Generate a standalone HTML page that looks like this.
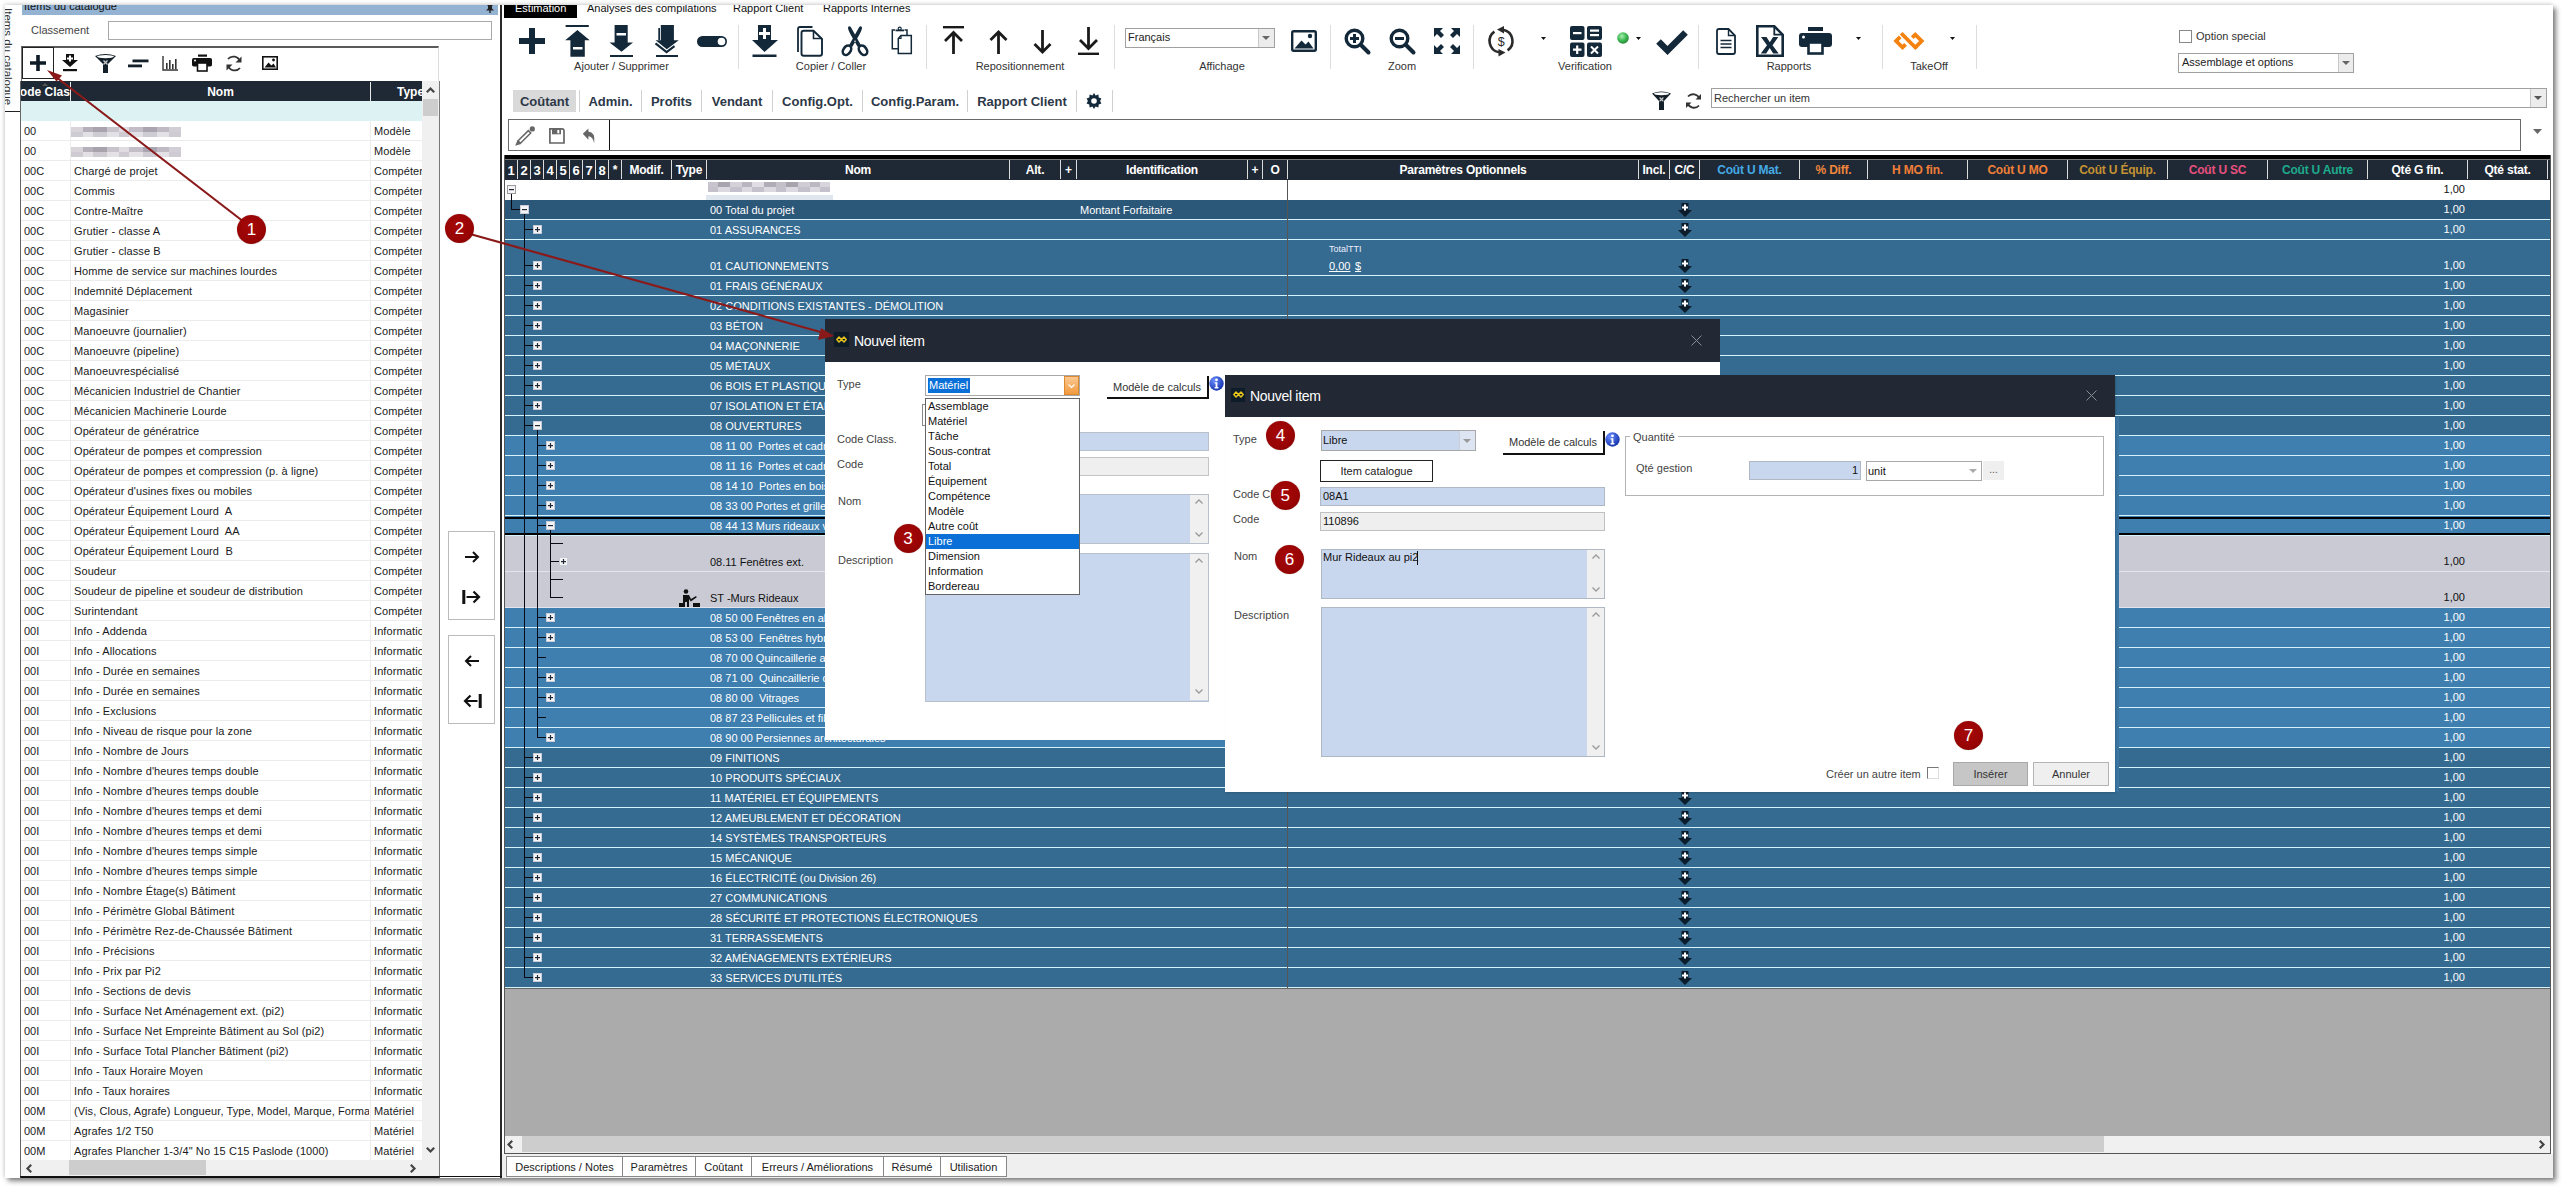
<!DOCTYPE html><html><head><meta charset="utf-8"><style>
html,body{margin:0;padding:0;}
body{width:2562px;height:1187px;overflow:hidden;position:relative;background:#fff;font-family:"Liberation Sans",sans-serif;}
div{position:absolute;}
.t{white-space:pre;font-family:"Liberation Sans",sans-serif;}
.hb{font-weight:bold;color:#fff;font-size:12px;}
</style></head><body>
<div id="win" style="left:5px;top:5px;width:2548px;height:1173px;overflow:hidden;background:#fff;box-shadow:3px 3px 5px rgba(0,0,0,0.5), -1px -1px 4px rgba(0,0,0,0.15)"><div style="left:-5px;top:-5px;width:2562px;height:1187px">
<div class="t" style="left:14px;top:8px;transform-origin:0 0;transform:rotate(90deg);font-size:11.5px;line-height:12px;color:#333">Items du catalogue</div>
<div style="left:5px;top:111px;width:16px;height:1px;background:#222"></div>
<div style="left:22px;top:4px;width:476px;height:11px;background:#94b2d2"></div>
<div style="left:22px;top:4px;width:476px;height:11px;overflow:hidden"><div class="t" style="left:2px;top:-5px;font-size:11px;color:#111;line-height:14px">Items du catalogue</div></div>
<svg style="position:absolute;left:485px;top:4px;overflow:visible" width="10" height="9" viewBox="0 0 10 9"><path d="M2 0h6v1.5h-1v3l2 2H1l2-2v-3H2z M4.3 6.5h1.4V9H4.3z" fill="#222"/></svg>
<div class="t" style="left:31px;top:21px;height:19px;line-height:19px;font-size:11px;color:#444">Classement</div>
<div style="left:108px;top:21px;width:384px;height:19px;border:1px solid #a9a9a9;box-sizing:border-box;background:#fff"></div>
<div style="left:21px;top:46px;width:418px;height:35px;border-top:2px solid #5a5a5a;border-left:1px solid #777;border-right:1px solid #ddd;box-sizing:border-box;background:#fff"></div>
<div style="left:22px;top:47px;width:32px;height:32px;border:1px solid #222;box-sizing:border-box;background:#fff"></div>
<svg style="position:absolute;left:30px;top:55px;overflow:visible" width="16" height="16" viewBox="0 0 16 16"><path d="M6.2 0h3.6v6.2H16v3.6H9.8V16H6.2V9.8H0V6.2h6.2z" fill="#0e1b26"/></svg>
<svg style="position:absolute;left:62px;top:54px;overflow:visible" width="16" height="18" viewBox="0 0 16 18"><path d="M4 0h8v6h4l-8 7-8-7h4z" fill="#111"/><path d="M7 1.5h2v2h2v2H9v2H7v-2H5v-2h2z" fill="#fff"/><rect x="1" y="15" width="14" height="2.2" fill="#111"/></svg>
<svg style="position:absolute;left:95px;top:54px;overflow:visible" width="21" height="19" viewBox="0 0 21 19"><path d="M0 2 Q10.5 -2 21 2 L13 10 V19 H8 V10 Z" fill="#13202a"/><ellipse cx="10.5" cy="2.6" rx="8.5" ry="1.6" fill="#fff"/><path d="M8.5 6.5l4 4m0-4l-4 4" stroke="#ccc" stroke-width="1.3"/></svg>
<svg style="position:absolute;left:128px;top:58px;overflow:visible" width="21" height="11" viewBox="0 0 21 11"><rect x="4.5" y="1.5" width="16" height="2.8" fill="#13202a"/><rect x="0" y="6.5" width="14" height="2.8" fill="#13202a"/></svg>
<svg style="position:absolute;left:162px;top:56px;overflow:visible" width="16" height="15" viewBox="0 0 16 15"><path d="M1 0v14h15" stroke="#333" stroke-width="1.4" fill="none"/><rect x="4" y="7" width="1.6" height="6" fill="#333"/><rect x="7" y="4" width="1.6" height="9" fill="#333"/><rect x="10" y="8" width="1.6" height="5" fill="#333"/><rect x="13" y="3" width="1.6" height="10" fill="#333"/></svg>
<svg style="position:absolute;left:192px;top:54px;overflow:visible" width="20" height="18" viewBox="0 0 20 18"><rect x="6" y="0.5" width="9" height="2.2" fill="#111"/><rect x="0" y="4" width="20" height="8.5" rx="1.8" fill="#111"/><circle cx="3" cy="6.5" r="1" fill="#fff"/><rect x="5.5" y="9" width="9.5" height="8" fill="#fff" stroke="#111" stroke-width="1.6"/></svg>
<svg style="position:absolute;left:225px;top:55px;overflow:visible" width="18" height="17" viewBox="0 0 18 17"><path d="M15 6.5A7 7 0 0 0 3 4" stroke="#333" stroke-width="1.8" fill="none"/><path d="M16.5 1.5v6h-6z" fill="#333"/><path d="M3 10.5A7 7 0 0 0 15 13" stroke="#333" stroke-width="1.8" fill="none"/><path d="M1.5 15.5v-6h6z" fill="#333"/></svg>
<svg style="position:absolute;left:262px;top:56px;overflow:visible" width="16" height="14" viewBox="0 0 16 14"><rect x="0.8" y="0.8" width="14.4" height="12.4" fill="none" stroke="#111" stroke-width="1.6"/><path d="M2.5 11.5l4-5 3 3 2-2 2.5 4z" fill="#111"/><circle cx="11.5" cy="4" r="1.4" fill="#111"/></svg>
<div style="left:20px;top:81px;width:420px;height:1097px;border-left:1px solid #666;border-right:1px solid #777;border-bottom:1px solid #111;box-sizing:border-box;background:#fff"></div>
<div style="left:21px;top:81px;width:401px;height:20px;background:#1f2935"></div>
<div style="left:21px;top:81px;width:49px;height:20px;overflow:hidden"><div class="t hb" style="left:-11px;top:1px;width:71px;text-align:center;line-height:20px">Code Class.</div></div>
<div style="left:70px;top:82px;width:1px;height:19px;background:#e8e8e8"></div>
<div class="t" style="left:71px;top:82px;width:299px;height:20px;line-height:20px;text-align:center;font-weight:bold;color:#fff;font-size:12px">Nom</div>
<div style="left:370px;top:82px;width:1px;height:19px;background:#e8e8e8"></div>
<div style="left:371px;top:81px;width:51px;height:20px;overflow:hidden"><div class="t hb" style="left:26px;top:1px;line-height:20px">Type</div></div>
<svg style="position:absolute;left:42px;top:83px;overflow:visible" width="6" height="3" viewBox="0 0 6 3"><path d="M0 3L3 0L6 3z" fill="#555"/></svg>
<div style="left:422px;top:81px;width:17px;height:1080px;background:#f0f0f0"></div>
<svg style="position:absolute;left:426px;top:87px;overflow:visible" width="9" height="6" viewBox="0 0 9 6"><path d="M0.8 5.2L4.5 1.5L8.2 5.2" stroke="#444" stroke-width="2.2" fill="none"/></svg>
<div style="left:423px;top:99px;width:15px;height:17px;background:#cdcdcd"></div>
<svg style="position:absolute;left:426px;top:1147px;overflow:visible" width="9" height="6" viewBox="0 0 9 6"><path d="M0.8 0.8L4.5 4.5L8.2 0.8" stroke="#444" stroke-width="2.2" fill="none"/></svg>
<div style="left:21px;top:101px;width:401px;height:20px;background:#ddf3f3"></div>
<div style="left:21px;top:121px;width:401px;height:1039px;overflow:hidden"><div style="left:-21px;top:-121px;width:500px;height:1200px">
<div style="left:21px;top:140px;width:401px;height:1px;background:#ececec"></div>
<div class="t" style="left:24px;top:121px;height:20px;line-height:20px;font-size:11px;color:#1a1a22">00</div>
<div style="left:371px;top:121px;width:51px;height:20px;overflow:hidden"><div class="t" style="left:3px;top:0;line-height:20px;font-size:11px;letter-spacing:0.1px;color:#1a1a22">Modèle</div></div>
<div style="left:21px;top:160px;width:401px;height:1px;background:#ececec"></div>
<div class="t" style="left:24px;top:141px;height:20px;line-height:20px;font-size:11px;color:#1a1a22">00</div>
<div style="left:371px;top:141px;width:51px;height:20px;overflow:hidden"><div class="t" style="left:3px;top:0;line-height:20px;font-size:11px;letter-spacing:0.1px;color:#1a1a22">Modèle</div></div>
<div style="left:21px;top:180px;width:401px;height:1px;background:#ececec"></div>
<div class="t" style="left:24px;top:161px;height:20px;line-height:20px;font-size:11px;color:#1a1a22">00C</div>
<div style="left:71px;top:161px;width:298px;height:20px;overflow:hidden"><div class="t" style="left:3px;top:0;line-height:20px;font-size:11px;letter-spacing:0.1px;color:#1a1a22">Chargé de projet</div></div>
<div style="left:371px;top:161px;width:51px;height:20px;overflow:hidden"><div class="t" style="left:3px;top:0;line-height:20px;font-size:11px;letter-spacing:0.1px;color:#1a1a22">Compétence</div></div>
<div style="left:21px;top:200px;width:401px;height:1px;background:#ececec"></div>
<div class="t" style="left:24px;top:181px;height:20px;line-height:20px;font-size:11px;color:#1a1a22">00C</div>
<div style="left:71px;top:181px;width:298px;height:20px;overflow:hidden"><div class="t" style="left:3px;top:0;line-height:20px;font-size:11px;letter-spacing:0.1px;color:#1a1a22">Commis</div></div>
<div style="left:371px;top:181px;width:51px;height:20px;overflow:hidden"><div class="t" style="left:3px;top:0;line-height:20px;font-size:11px;letter-spacing:0.1px;color:#1a1a22">Compétence</div></div>
<div style="left:21px;top:220px;width:401px;height:1px;background:#ececec"></div>
<div class="t" style="left:24px;top:201px;height:20px;line-height:20px;font-size:11px;color:#1a1a22">00C</div>
<div style="left:71px;top:201px;width:298px;height:20px;overflow:hidden"><div class="t" style="left:3px;top:0;line-height:20px;font-size:11px;letter-spacing:0.1px;color:#1a1a22">Contre-Maître</div></div>
<div style="left:371px;top:201px;width:51px;height:20px;overflow:hidden"><div class="t" style="left:3px;top:0;line-height:20px;font-size:11px;letter-spacing:0.1px;color:#1a1a22">Compétence</div></div>
<div style="left:21px;top:240px;width:401px;height:1px;background:#ececec"></div>
<div class="t" style="left:24px;top:221px;height:20px;line-height:20px;font-size:11px;color:#1a1a22">00C</div>
<div style="left:71px;top:221px;width:298px;height:20px;overflow:hidden"><div class="t" style="left:3px;top:0;line-height:20px;font-size:11px;letter-spacing:0.1px;color:#1a1a22">Grutier - classe A</div></div>
<div style="left:371px;top:221px;width:51px;height:20px;overflow:hidden"><div class="t" style="left:3px;top:0;line-height:20px;font-size:11px;letter-spacing:0.1px;color:#1a1a22">Compétence</div></div>
<div style="left:21px;top:260px;width:401px;height:1px;background:#ececec"></div>
<div class="t" style="left:24px;top:241px;height:20px;line-height:20px;font-size:11px;color:#1a1a22">00C</div>
<div style="left:71px;top:241px;width:298px;height:20px;overflow:hidden"><div class="t" style="left:3px;top:0;line-height:20px;font-size:11px;letter-spacing:0.1px;color:#1a1a22">Grutier - classe B</div></div>
<div style="left:371px;top:241px;width:51px;height:20px;overflow:hidden"><div class="t" style="left:3px;top:0;line-height:20px;font-size:11px;letter-spacing:0.1px;color:#1a1a22">Compétence</div></div>
<div style="left:21px;top:280px;width:401px;height:1px;background:#ececec"></div>
<div class="t" style="left:24px;top:261px;height:20px;line-height:20px;font-size:11px;color:#1a1a22">00C</div>
<div style="left:71px;top:261px;width:298px;height:20px;overflow:hidden"><div class="t" style="left:3px;top:0;line-height:20px;font-size:11px;letter-spacing:0.1px;color:#1a1a22">Homme de service sur machines lourdes</div></div>
<div style="left:371px;top:261px;width:51px;height:20px;overflow:hidden"><div class="t" style="left:3px;top:0;line-height:20px;font-size:11px;letter-spacing:0.1px;color:#1a1a22">Compétence</div></div>
<div style="left:21px;top:300px;width:401px;height:1px;background:#ececec"></div>
<div class="t" style="left:24px;top:281px;height:20px;line-height:20px;font-size:11px;color:#1a1a22">00C</div>
<div style="left:71px;top:281px;width:298px;height:20px;overflow:hidden"><div class="t" style="left:3px;top:0;line-height:20px;font-size:11px;letter-spacing:0.1px;color:#1a1a22">Indemnité Déplacement</div></div>
<div style="left:371px;top:281px;width:51px;height:20px;overflow:hidden"><div class="t" style="left:3px;top:0;line-height:20px;font-size:11px;letter-spacing:0.1px;color:#1a1a22">Compétence</div></div>
<div style="left:21px;top:320px;width:401px;height:1px;background:#ececec"></div>
<div class="t" style="left:24px;top:301px;height:20px;line-height:20px;font-size:11px;color:#1a1a22">00C</div>
<div style="left:71px;top:301px;width:298px;height:20px;overflow:hidden"><div class="t" style="left:3px;top:0;line-height:20px;font-size:11px;letter-spacing:0.1px;color:#1a1a22">Magasinier</div></div>
<div style="left:371px;top:301px;width:51px;height:20px;overflow:hidden"><div class="t" style="left:3px;top:0;line-height:20px;font-size:11px;letter-spacing:0.1px;color:#1a1a22">Compétence</div></div>
<div style="left:21px;top:340px;width:401px;height:1px;background:#ececec"></div>
<div class="t" style="left:24px;top:321px;height:20px;line-height:20px;font-size:11px;color:#1a1a22">00C</div>
<div style="left:71px;top:321px;width:298px;height:20px;overflow:hidden"><div class="t" style="left:3px;top:0;line-height:20px;font-size:11px;letter-spacing:0.1px;color:#1a1a22">Manoeuvre (journalier)</div></div>
<div style="left:371px;top:321px;width:51px;height:20px;overflow:hidden"><div class="t" style="left:3px;top:0;line-height:20px;font-size:11px;letter-spacing:0.1px;color:#1a1a22">Compétence</div></div>
<div style="left:21px;top:360px;width:401px;height:1px;background:#ececec"></div>
<div class="t" style="left:24px;top:341px;height:20px;line-height:20px;font-size:11px;color:#1a1a22">00C</div>
<div style="left:71px;top:341px;width:298px;height:20px;overflow:hidden"><div class="t" style="left:3px;top:0;line-height:20px;font-size:11px;letter-spacing:0.1px;color:#1a1a22">Manoeuvre (pipeline)</div></div>
<div style="left:371px;top:341px;width:51px;height:20px;overflow:hidden"><div class="t" style="left:3px;top:0;line-height:20px;font-size:11px;letter-spacing:0.1px;color:#1a1a22">Compétence</div></div>
<div style="left:21px;top:380px;width:401px;height:1px;background:#ececec"></div>
<div class="t" style="left:24px;top:361px;height:20px;line-height:20px;font-size:11px;color:#1a1a22">00C</div>
<div style="left:71px;top:361px;width:298px;height:20px;overflow:hidden"><div class="t" style="left:3px;top:0;line-height:20px;font-size:11px;letter-spacing:0.1px;color:#1a1a22">Manoeuvrespécialisé</div></div>
<div style="left:371px;top:361px;width:51px;height:20px;overflow:hidden"><div class="t" style="left:3px;top:0;line-height:20px;font-size:11px;letter-spacing:0.1px;color:#1a1a22">Compétence</div></div>
<div style="left:21px;top:400px;width:401px;height:1px;background:#ececec"></div>
<div class="t" style="left:24px;top:381px;height:20px;line-height:20px;font-size:11px;color:#1a1a22">00C</div>
<div style="left:71px;top:381px;width:298px;height:20px;overflow:hidden"><div class="t" style="left:3px;top:0;line-height:20px;font-size:11px;letter-spacing:0.1px;color:#1a1a22">Mécanicien Industriel de Chantier</div></div>
<div style="left:371px;top:381px;width:51px;height:20px;overflow:hidden"><div class="t" style="left:3px;top:0;line-height:20px;font-size:11px;letter-spacing:0.1px;color:#1a1a22">Compétence</div></div>
<div style="left:21px;top:420px;width:401px;height:1px;background:#ececec"></div>
<div class="t" style="left:24px;top:401px;height:20px;line-height:20px;font-size:11px;color:#1a1a22">00C</div>
<div style="left:71px;top:401px;width:298px;height:20px;overflow:hidden"><div class="t" style="left:3px;top:0;line-height:20px;font-size:11px;letter-spacing:0.1px;color:#1a1a22">Mécanicien Machinerie Lourde</div></div>
<div style="left:371px;top:401px;width:51px;height:20px;overflow:hidden"><div class="t" style="left:3px;top:0;line-height:20px;font-size:11px;letter-spacing:0.1px;color:#1a1a22">Compétence</div></div>
<div style="left:21px;top:440px;width:401px;height:1px;background:#ececec"></div>
<div class="t" style="left:24px;top:421px;height:20px;line-height:20px;font-size:11px;color:#1a1a22">00C</div>
<div style="left:71px;top:421px;width:298px;height:20px;overflow:hidden"><div class="t" style="left:3px;top:0;line-height:20px;font-size:11px;letter-spacing:0.1px;color:#1a1a22">Opérateur de génératrice</div></div>
<div style="left:371px;top:421px;width:51px;height:20px;overflow:hidden"><div class="t" style="left:3px;top:0;line-height:20px;font-size:11px;letter-spacing:0.1px;color:#1a1a22">Compétence</div></div>
<div style="left:21px;top:460px;width:401px;height:1px;background:#ececec"></div>
<div class="t" style="left:24px;top:441px;height:20px;line-height:20px;font-size:11px;color:#1a1a22">00C</div>
<div style="left:71px;top:441px;width:298px;height:20px;overflow:hidden"><div class="t" style="left:3px;top:0;line-height:20px;font-size:11px;letter-spacing:0.1px;color:#1a1a22">Opérateur de pompes et compression</div></div>
<div style="left:371px;top:441px;width:51px;height:20px;overflow:hidden"><div class="t" style="left:3px;top:0;line-height:20px;font-size:11px;letter-spacing:0.1px;color:#1a1a22">Compétence</div></div>
<div style="left:21px;top:480px;width:401px;height:1px;background:#ececec"></div>
<div class="t" style="left:24px;top:461px;height:20px;line-height:20px;font-size:11px;color:#1a1a22">00C</div>
<div style="left:71px;top:461px;width:298px;height:20px;overflow:hidden"><div class="t" style="left:3px;top:0;line-height:20px;font-size:11px;letter-spacing:0.1px;color:#1a1a22">Opérateur de pompes et compression (p. à ligne)</div></div>
<div style="left:371px;top:461px;width:51px;height:20px;overflow:hidden"><div class="t" style="left:3px;top:0;line-height:20px;font-size:11px;letter-spacing:0.1px;color:#1a1a22">Compétence</div></div>
<div style="left:21px;top:500px;width:401px;height:1px;background:#ececec"></div>
<div class="t" style="left:24px;top:481px;height:20px;line-height:20px;font-size:11px;color:#1a1a22">00C</div>
<div style="left:71px;top:481px;width:298px;height:20px;overflow:hidden"><div class="t" style="left:3px;top:0;line-height:20px;font-size:11px;letter-spacing:0.1px;color:#1a1a22">Opérateur d&#x27;usines fixes ou mobiles</div></div>
<div style="left:371px;top:481px;width:51px;height:20px;overflow:hidden"><div class="t" style="left:3px;top:0;line-height:20px;font-size:11px;letter-spacing:0.1px;color:#1a1a22">Compétence</div></div>
<div style="left:21px;top:520px;width:401px;height:1px;background:#ececec"></div>
<div class="t" style="left:24px;top:501px;height:20px;line-height:20px;font-size:11px;color:#1a1a22">00C</div>
<div style="left:71px;top:501px;width:298px;height:20px;overflow:hidden"><div class="t" style="left:3px;top:0;line-height:20px;font-size:11px;letter-spacing:0.1px;color:#1a1a22">Opérateur Équipement Lourd  A</div></div>
<div style="left:371px;top:501px;width:51px;height:20px;overflow:hidden"><div class="t" style="left:3px;top:0;line-height:20px;font-size:11px;letter-spacing:0.1px;color:#1a1a22">Compétence</div></div>
<div style="left:21px;top:540px;width:401px;height:1px;background:#ececec"></div>
<div class="t" style="left:24px;top:521px;height:20px;line-height:20px;font-size:11px;color:#1a1a22">00C</div>
<div style="left:71px;top:521px;width:298px;height:20px;overflow:hidden"><div class="t" style="left:3px;top:0;line-height:20px;font-size:11px;letter-spacing:0.1px;color:#1a1a22">Opérateur Équipement Lourd  AA</div></div>
<div style="left:371px;top:521px;width:51px;height:20px;overflow:hidden"><div class="t" style="left:3px;top:0;line-height:20px;font-size:11px;letter-spacing:0.1px;color:#1a1a22">Compétence</div></div>
<div style="left:21px;top:560px;width:401px;height:1px;background:#ececec"></div>
<div class="t" style="left:24px;top:541px;height:20px;line-height:20px;font-size:11px;color:#1a1a22">00C</div>
<div style="left:71px;top:541px;width:298px;height:20px;overflow:hidden"><div class="t" style="left:3px;top:0;line-height:20px;font-size:11px;letter-spacing:0.1px;color:#1a1a22">Opérateur Équipement Lourd  B</div></div>
<div style="left:371px;top:541px;width:51px;height:20px;overflow:hidden"><div class="t" style="left:3px;top:0;line-height:20px;font-size:11px;letter-spacing:0.1px;color:#1a1a22">Compétence</div></div>
<div style="left:21px;top:580px;width:401px;height:1px;background:#ececec"></div>
<div class="t" style="left:24px;top:561px;height:20px;line-height:20px;font-size:11px;color:#1a1a22">00C</div>
<div style="left:71px;top:561px;width:298px;height:20px;overflow:hidden"><div class="t" style="left:3px;top:0;line-height:20px;font-size:11px;letter-spacing:0.1px;color:#1a1a22">Soudeur</div></div>
<div style="left:371px;top:561px;width:51px;height:20px;overflow:hidden"><div class="t" style="left:3px;top:0;line-height:20px;font-size:11px;letter-spacing:0.1px;color:#1a1a22">Compétence</div></div>
<div style="left:21px;top:600px;width:401px;height:1px;background:#ececec"></div>
<div class="t" style="left:24px;top:581px;height:20px;line-height:20px;font-size:11px;color:#1a1a22">00C</div>
<div style="left:71px;top:581px;width:298px;height:20px;overflow:hidden"><div class="t" style="left:3px;top:0;line-height:20px;font-size:11px;letter-spacing:0.1px;color:#1a1a22">Soudeur de pipeline et soudeur de distribution</div></div>
<div style="left:371px;top:581px;width:51px;height:20px;overflow:hidden"><div class="t" style="left:3px;top:0;line-height:20px;font-size:11px;letter-spacing:0.1px;color:#1a1a22">Compétence</div></div>
<div style="left:21px;top:620px;width:401px;height:1px;background:#ececec"></div>
<div class="t" style="left:24px;top:601px;height:20px;line-height:20px;font-size:11px;color:#1a1a22">00C</div>
<div style="left:71px;top:601px;width:298px;height:20px;overflow:hidden"><div class="t" style="left:3px;top:0;line-height:20px;font-size:11px;letter-spacing:0.1px;color:#1a1a22">Surintendant</div></div>
<div style="left:371px;top:601px;width:51px;height:20px;overflow:hidden"><div class="t" style="left:3px;top:0;line-height:20px;font-size:11px;letter-spacing:0.1px;color:#1a1a22">Compétence</div></div>
<div style="left:21px;top:640px;width:401px;height:1px;background:#ececec"></div>
<div class="t" style="left:24px;top:621px;height:20px;line-height:20px;font-size:11px;color:#1a1a22">00I</div>
<div style="left:71px;top:621px;width:298px;height:20px;overflow:hidden"><div class="t" style="left:3px;top:0;line-height:20px;font-size:11px;letter-spacing:0.1px;color:#1a1a22">Info - Addenda</div></div>
<div style="left:371px;top:621px;width:51px;height:20px;overflow:hidden"><div class="t" style="left:3px;top:0;line-height:20px;font-size:11px;letter-spacing:0.1px;color:#1a1a22">Information</div></div>
<div style="left:21px;top:660px;width:401px;height:1px;background:#ececec"></div>
<div class="t" style="left:24px;top:641px;height:20px;line-height:20px;font-size:11px;color:#1a1a22">00I</div>
<div style="left:71px;top:641px;width:298px;height:20px;overflow:hidden"><div class="t" style="left:3px;top:0;line-height:20px;font-size:11px;letter-spacing:0.1px;color:#1a1a22">Info - Allocations</div></div>
<div style="left:371px;top:641px;width:51px;height:20px;overflow:hidden"><div class="t" style="left:3px;top:0;line-height:20px;font-size:11px;letter-spacing:0.1px;color:#1a1a22">Information</div></div>
<div style="left:21px;top:680px;width:401px;height:1px;background:#ececec"></div>
<div class="t" style="left:24px;top:661px;height:20px;line-height:20px;font-size:11px;color:#1a1a22">00I</div>
<div style="left:71px;top:661px;width:298px;height:20px;overflow:hidden"><div class="t" style="left:3px;top:0;line-height:20px;font-size:11px;letter-spacing:0.1px;color:#1a1a22">Info - Durée en semaines</div></div>
<div style="left:371px;top:661px;width:51px;height:20px;overflow:hidden"><div class="t" style="left:3px;top:0;line-height:20px;font-size:11px;letter-spacing:0.1px;color:#1a1a22">Information</div></div>
<div style="left:21px;top:700px;width:401px;height:1px;background:#ececec"></div>
<div class="t" style="left:24px;top:681px;height:20px;line-height:20px;font-size:11px;color:#1a1a22">00I</div>
<div style="left:71px;top:681px;width:298px;height:20px;overflow:hidden"><div class="t" style="left:3px;top:0;line-height:20px;font-size:11px;letter-spacing:0.1px;color:#1a1a22">Info - Durée en semaines</div></div>
<div style="left:371px;top:681px;width:51px;height:20px;overflow:hidden"><div class="t" style="left:3px;top:0;line-height:20px;font-size:11px;letter-spacing:0.1px;color:#1a1a22">Information</div></div>
<div style="left:21px;top:720px;width:401px;height:1px;background:#ececec"></div>
<div class="t" style="left:24px;top:701px;height:20px;line-height:20px;font-size:11px;color:#1a1a22">00I</div>
<div style="left:71px;top:701px;width:298px;height:20px;overflow:hidden"><div class="t" style="left:3px;top:0;line-height:20px;font-size:11px;letter-spacing:0.1px;color:#1a1a22">Info - Exclusions</div></div>
<div style="left:371px;top:701px;width:51px;height:20px;overflow:hidden"><div class="t" style="left:3px;top:0;line-height:20px;font-size:11px;letter-spacing:0.1px;color:#1a1a22">Information</div></div>
<div style="left:21px;top:740px;width:401px;height:1px;background:#ececec"></div>
<div class="t" style="left:24px;top:721px;height:20px;line-height:20px;font-size:11px;color:#1a1a22">00I</div>
<div style="left:71px;top:721px;width:298px;height:20px;overflow:hidden"><div class="t" style="left:3px;top:0;line-height:20px;font-size:11px;letter-spacing:0.1px;color:#1a1a22">Info - Niveau de risque pour la zone</div></div>
<div style="left:371px;top:721px;width:51px;height:20px;overflow:hidden"><div class="t" style="left:3px;top:0;line-height:20px;font-size:11px;letter-spacing:0.1px;color:#1a1a22">Information</div></div>
<div style="left:21px;top:760px;width:401px;height:1px;background:#ececec"></div>
<div class="t" style="left:24px;top:741px;height:20px;line-height:20px;font-size:11px;color:#1a1a22">00I</div>
<div style="left:71px;top:741px;width:298px;height:20px;overflow:hidden"><div class="t" style="left:3px;top:0;line-height:20px;font-size:11px;letter-spacing:0.1px;color:#1a1a22">Info - Nombre de Jours</div></div>
<div style="left:371px;top:741px;width:51px;height:20px;overflow:hidden"><div class="t" style="left:3px;top:0;line-height:20px;font-size:11px;letter-spacing:0.1px;color:#1a1a22">Information</div></div>
<div style="left:21px;top:780px;width:401px;height:1px;background:#ececec"></div>
<div class="t" style="left:24px;top:761px;height:20px;line-height:20px;font-size:11px;color:#1a1a22">00I</div>
<div style="left:71px;top:761px;width:298px;height:20px;overflow:hidden"><div class="t" style="left:3px;top:0;line-height:20px;font-size:11px;letter-spacing:0.1px;color:#1a1a22">Info - Nombre d&#x27;heures temps double</div></div>
<div style="left:371px;top:761px;width:51px;height:20px;overflow:hidden"><div class="t" style="left:3px;top:0;line-height:20px;font-size:11px;letter-spacing:0.1px;color:#1a1a22">Information</div></div>
<div style="left:21px;top:800px;width:401px;height:1px;background:#ececec"></div>
<div class="t" style="left:24px;top:781px;height:20px;line-height:20px;font-size:11px;color:#1a1a22">00I</div>
<div style="left:71px;top:781px;width:298px;height:20px;overflow:hidden"><div class="t" style="left:3px;top:0;line-height:20px;font-size:11px;letter-spacing:0.1px;color:#1a1a22">Info - Nombre d&#x27;heures temps double</div></div>
<div style="left:371px;top:781px;width:51px;height:20px;overflow:hidden"><div class="t" style="left:3px;top:0;line-height:20px;font-size:11px;letter-spacing:0.1px;color:#1a1a22">Information</div></div>
<div style="left:21px;top:820px;width:401px;height:1px;background:#ececec"></div>
<div class="t" style="left:24px;top:801px;height:20px;line-height:20px;font-size:11px;color:#1a1a22">00I</div>
<div style="left:71px;top:801px;width:298px;height:20px;overflow:hidden"><div class="t" style="left:3px;top:0;line-height:20px;font-size:11px;letter-spacing:0.1px;color:#1a1a22">Info - Nombre d&#x27;heures temps et demi</div></div>
<div style="left:371px;top:801px;width:51px;height:20px;overflow:hidden"><div class="t" style="left:3px;top:0;line-height:20px;font-size:11px;letter-spacing:0.1px;color:#1a1a22">Information</div></div>
<div style="left:21px;top:840px;width:401px;height:1px;background:#ececec"></div>
<div class="t" style="left:24px;top:821px;height:20px;line-height:20px;font-size:11px;color:#1a1a22">00I</div>
<div style="left:71px;top:821px;width:298px;height:20px;overflow:hidden"><div class="t" style="left:3px;top:0;line-height:20px;font-size:11px;letter-spacing:0.1px;color:#1a1a22">Info - Nombre d&#x27;heures temps et demi</div></div>
<div style="left:371px;top:821px;width:51px;height:20px;overflow:hidden"><div class="t" style="left:3px;top:0;line-height:20px;font-size:11px;letter-spacing:0.1px;color:#1a1a22">Information</div></div>
<div style="left:21px;top:860px;width:401px;height:1px;background:#ececec"></div>
<div class="t" style="left:24px;top:841px;height:20px;line-height:20px;font-size:11px;color:#1a1a22">00I</div>
<div style="left:71px;top:841px;width:298px;height:20px;overflow:hidden"><div class="t" style="left:3px;top:0;line-height:20px;font-size:11px;letter-spacing:0.1px;color:#1a1a22">Info - Nombre d&#x27;heures temps simple</div></div>
<div style="left:371px;top:841px;width:51px;height:20px;overflow:hidden"><div class="t" style="left:3px;top:0;line-height:20px;font-size:11px;letter-spacing:0.1px;color:#1a1a22">Information</div></div>
<div style="left:21px;top:880px;width:401px;height:1px;background:#ececec"></div>
<div class="t" style="left:24px;top:861px;height:20px;line-height:20px;font-size:11px;color:#1a1a22">00I</div>
<div style="left:71px;top:861px;width:298px;height:20px;overflow:hidden"><div class="t" style="left:3px;top:0;line-height:20px;font-size:11px;letter-spacing:0.1px;color:#1a1a22">Info - Nombre d&#x27;heures temps simple</div></div>
<div style="left:371px;top:861px;width:51px;height:20px;overflow:hidden"><div class="t" style="left:3px;top:0;line-height:20px;font-size:11px;letter-spacing:0.1px;color:#1a1a22">Information</div></div>
<div style="left:21px;top:900px;width:401px;height:1px;background:#ececec"></div>
<div class="t" style="left:24px;top:881px;height:20px;line-height:20px;font-size:11px;color:#1a1a22">00I</div>
<div style="left:71px;top:881px;width:298px;height:20px;overflow:hidden"><div class="t" style="left:3px;top:0;line-height:20px;font-size:11px;letter-spacing:0.1px;color:#1a1a22">Info - Nombre Étage(s) Bâtiment</div></div>
<div style="left:371px;top:881px;width:51px;height:20px;overflow:hidden"><div class="t" style="left:3px;top:0;line-height:20px;font-size:11px;letter-spacing:0.1px;color:#1a1a22">Information</div></div>
<div style="left:21px;top:920px;width:401px;height:1px;background:#ececec"></div>
<div class="t" style="left:24px;top:901px;height:20px;line-height:20px;font-size:11px;color:#1a1a22">00I</div>
<div style="left:71px;top:901px;width:298px;height:20px;overflow:hidden"><div class="t" style="left:3px;top:0;line-height:20px;font-size:11px;letter-spacing:0.1px;color:#1a1a22">Info - Périmètre Global Bâtiment</div></div>
<div style="left:371px;top:901px;width:51px;height:20px;overflow:hidden"><div class="t" style="left:3px;top:0;line-height:20px;font-size:11px;letter-spacing:0.1px;color:#1a1a22">Information</div></div>
<div style="left:21px;top:940px;width:401px;height:1px;background:#ececec"></div>
<div class="t" style="left:24px;top:921px;height:20px;line-height:20px;font-size:11px;color:#1a1a22">00I</div>
<div style="left:71px;top:921px;width:298px;height:20px;overflow:hidden"><div class="t" style="left:3px;top:0;line-height:20px;font-size:11px;letter-spacing:0.1px;color:#1a1a22">Info - Périmètre Rez-de-Chaussée Bâtiment</div></div>
<div style="left:371px;top:921px;width:51px;height:20px;overflow:hidden"><div class="t" style="left:3px;top:0;line-height:20px;font-size:11px;letter-spacing:0.1px;color:#1a1a22">Information</div></div>
<div style="left:21px;top:960px;width:401px;height:1px;background:#ececec"></div>
<div class="t" style="left:24px;top:941px;height:20px;line-height:20px;font-size:11px;color:#1a1a22">00I</div>
<div style="left:71px;top:941px;width:298px;height:20px;overflow:hidden"><div class="t" style="left:3px;top:0;line-height:20px;font-size:11px;letter-spacing:0.1px;color:#1a1a22">Info - Précisions</div></div>
<div style="left:371px;top:941px;width:51px;height:20px;overflow:hidden"><div class="t" style="left:3px;top:0;line-height:20px;font-size:11px;letter-spacing:0.1px;color:#1a1a22">Information</div></div>
<div style="left:21px;top:980px;width:401px;height:1px;background:#ececec"></div>
<div class="t" style="left:24px;top:961px;height:20px;line-height:20px;font-size:11px;color:#1a1a22">00I</div>
<div style="left:71px;top:961px;width:298px;height:20px;overflow:hidden"><div class="t" style="left:3px;top:0;line-height:20px;font-size:11px;letter-spacing:0.1px;color:#1a1a22">Info - Prix par Pi2</div></div>
<div style="left:371px;top:961px;width:51px;height:20px;overflow:hidden"><div class="t" style="left:3px;top:0;line-height:20px;font-size:11px;letter-spacing:0.1px;color:#1a1a22">Information</div></div>
<div style="left:21px;top:1000px;width:401px;height:1px;background:#ececec"></div>
<div class="t" style="left:24px;top:981px;height:20px;line-height:20px;font-size:11px;color:#1a1a22">00I</div>
<div style="left:71px;top:981px;width:298px;height:20px;overflow:hidden"><div class="t" style="left:3px;top:0;line-height:20px;font-size:11px;letter-spacing:0.1px;color:#1a1a22">Info - Sections de devis</div></div>
<div style="left:371px;top:981px;width:51px;height:20px;overflow:hidden"><div class="t" style="left:3px;top:0;line-height:20px;font-size:11px;letter-spacing:0.1px;color:#1a1a22">Information</div></div>
<div style="left:21px;top:1020px;width:401px;height:1px;background:#ececec"></div>
<div class="t" style="left:24px;top:1001px;height:20px;line-height:20px;font-size:11px;color:#1a1a22">00I</div>
<div style="left:71px;top:1001px;width:298px;height:20px;overflow:hidden"><div class="t" style="left:3px;top:0;line-height:20px;font-size:11px;letter-spacing:0.1px;color:#1a1a22">Info - Surface Net Aménagement ext. (pi2)</div></div>
<div style="left:371px;top:1001px;width:51px;height:20px;overflow:hidden"><div class="t" style="left:3px;top:0;line-height:20px;font-size:11px;letter-spacing:0.1px;color:#1a1a22">Information</div></div>
<div style="left:21px;top:1040px;width:401px;height:1px;background:#ececec"></div>
<div class="t" style="left:24px;top:1021px;height:20px;line-height:20px;font-size:11px;color:#1a1a22">00I</div>
<div style="left:71px;top:1021px;width:298px;height:20px;overflow:hidden"><div class="t" style="left:3px;top:0;line-height:20px;font-size:11px;letter-spacing:0.1px;color:#1a1a22">Info - Surface Net Empreinte Bâtiment au Sol (pi2)</div></div>
<div style="left:371px;top:1021px;width:51px;height:20px;overflow:hidden"><div class="t" style="left:3px;top:0;line-height:20px;font-size:11px;letter-spacing:0.1px;color:#1a1a22">Information</div></div>
<div style="left:21px;top:1060px;width:401px;height:1px;background:#ececec"></div>
<div class="t" style="left:24px;top:1041px;height:20px;line-height:20px;font-size:11px;color:#1a1a22">00I</div>
<div style="left:71px;top:1041px;width:298px;height:20px;overflow:hidden"><div class="t" style="left:3px;top:0;line-height:20px;font-size:11px;letter-spacing:0.1px;color:#1a1a22">Info - Surface Total Plancher Bâtiment (pi2)</div></div>
<div style="left:371px;top:1041px;width:51px;height:20px;overflow:hidden"><div class="t" style="left:3px;top:0;line-height:20px;font-size:11px;letter-spacing:0.1px;color:#1a1a22">Information</div></div>
<div style="left:21px;top:1080px;width:401px;height:1px;background:#ececec"></div>
<div class="t" style="left:24px;top:1061px;height:20px;line-height:20px;font-size:11px;color:#1a1a22">00I</div>
<div style="left:71px;top:1061px;width:298px;height:20px;overflow:hidden"><div class="t" style="left:3px;top:0;line-height:20px;font-size:11px;letter-spacing:0.1px;color:#1a1a22">Info - Taux Horaire Moyen</div></div>
<div style="left:371px;top:1061px;width:51px;height:20px;overflow:hidden"><div class="t" style="left:3px;top:0;line-height:20px;font-size:11px;letter-spacing:0.1px;color:#1a1a22">Information</div></div>
<div style="left:21px;top:1100px;width:401px;height:1px;background:#ececec"></div>
<div class="t" style="left:24px;top:1081px;height:20px;line-height:20px;font-size:11px;color:#1a1a22">00I</div>
<div style="left:71px;top:1081px;width:298px;height:20px;overflow:hidden"><div class="t" style="left:3px;top:0;line-height:20px;font-size:11px;letter-spacing:0.1px;color:#1a1a22">Info - Taux horaires</div></div>
<div style="left:371px;top:1081px;width:51px;height:20px;overflow:hidden"><div class="t" style="left:3px;top:0;line-height:20px;font-size:11px;letter-spacing:0.1px;color:#1a1a22">Information</div></div>
<div style="left:21px;top:1120px;width:401px;height:1px;background:#ececec"></div>
<div class="t" style="left:24px;top:1101px;height:20px;line-height:20px;font-size:11px;color:#1a1a22">00M</div>
<div style="left:71px;top:1101px;width:298px;height:20px;overflow:hidden"><div class="t" style="left:3px;top:0;line-height:20px;font-size:11px;letter-spacing:0.1px;color:#1a1a22">(Vis, Clous, Agrafe) Longueur, Type, Model, Marque, Format</div></div>
<div style="left:371px;top:1101px;width:51px;height:20px;overflow:hidden"><div class="t" style="left:3px;top:0;line-height:20px;font-size:11px;letter-spacing:0.1px;color:#1a1a22">Matériel</div></div>
<div style="left:21px;top:1140px;width:401px;height:1px;background:#ececec"></div>
<div class="t" style="left:24px;top:1121px;height:20px;line-height:20px;font-size:11px;color:#1a1a22">00M</div>
<div style="left:71px;top:1121px;width:298px;height:20px;overflow:hidden"><div class="t" style="left:3px;top:0;line-height:20px;font-size:11px;letter-spacing:0.1px;color:#1a1a22">Agrafes 1/2 T50</div></div>
<div style="left:371px;top:1121px;width:51px;height:20px;overflow:hidden"><div class="t" style="left:3px;top:0;line-height:20px;font-size:11px;letter-spacing:0.1px;color:#1a1a22">Matériel</div></div>
<div style="left:21px;top:1160px;width:401px;height:1px;background:#ececec"></div>
<div class="t" style="left:24px;top:1141px;height:20px;line-height:20px;font-size:11px;color:#1a1a22">00M</div>
<div style="left:71px;top:1141px;width:298px;height:20px;overflow:hidden"><div class="t" style="left:3px;top:0;line-height:20px;font-size:11px;letter-spacing:0.1px;color:#1a1a22">Agrafes Plancher 1-3/4&quot; No 15 C15 Paslode (1000)</div></div>
<div style="left:371px;top:1141px;width:51px;height:20px;overflow:hidden"><div class="t" style="left:3px;top:0;line-height:20px;font-size:11px;letter-spacing:0.1px;color:#1a1a22">Matériel</div></div>
<div style="left:70px;top:121px;width:1px;height:1040px;background:#ececec"></div>
<div style="left:370px;top:121px;width:1px;height:1040px;background:#ececec"></div>
<div style="left:71px;top:127px;width:12px;height:5px;background:#d8d4da"></div>
<div style="left:71px;top:132px;width:12px;height:5px;background:#cfcbd3"></div>
<div style="left:83px;top:127px;width:10px;height:5px;background:#b5b0ba"></div>
<div style="left:83px;top:132px;width:10px;height:5px;background:#e4e1e6"></div>
<div style="left:93px;top:127px;width:14px;height:5px;background:#a8a3ad"></div>
<div style="left:93px;top:132px;width:14px;height:5px;background:#cfcbd3"></div>
<div style="left:107px;top:127px;width:12px;height:5px;background:#c9c4cc"></div>
<div style="left:107px;top:132px;width:12px;height:5px;background:#e4e1e6"></div>
<div style="left:119px;top:127px;width:10px;height:5px;background:#e0dce2"></div>
<div style="left:119px;top:132px;width:10px;height:5px;background:#cfcbd3"></div>
<div style="left:129px;top:127px;width:14px;height:5px;background:#c2bdc6"></div>
<div style="left:129px;top:132px;width:14px;height:5px;background:#e4e1e6"></div>
<div style="left:143px;top:127px;width:14px;height:5px;background:#aaa5b0"></div>
<div style="left:143px;top:132px;width:14px;height:5px;background:#cfcbd3"></div>
<div style="left:157px;top:127px;width:12px;height:5px;background:#bfbac4"></div>
<div style="left:157px;top:132px;width:12px;height:5px;background:#e4e1e6"></div>
<div style="left:169px;top:127px;width:12px;height:5px;background:#d2ced6"></div>
<div style="left:169px;top:132px;width:12px;height:5px;background:#cfcbd3"></div>
<div style="left:71px;top:147px;width:12px;height:5px;background:#d8d4da"></div>
<div style="left:71px;top:152px;width:12px;height:5px;background:#cfcbd3"></div>
<div style="left:83px;top:147px;width:10px;height:5px;background:#b5b0ba"></div>
<div style="left:83px;top:152px;width:10px;height:5px;background:#e4e1e6"></div>
<div style="left:93px;top:147px;width:14px;height:5px;background:#a8a3ad"></div>
<div style="left:93px;top:152px;width:14px;height:5px;background:#cfcbd3"></div>
<div style="left:107px;top:147px;width:12px;height:5px;background:#c9c4cc"></div>
<div style="left:107px;top:152px;width:12px;height:5px;background:#e4e1e6"></div>
<div style="left:119px;top:147px;width:10px;height:5px;background:#e0dce2"></div>
<div style="left:119px;top:152px;width:10px;height:5px;background:#cfcbd3"></div>
<div style="left:129px;top:147px;width:14px;height:5px;background:#c2bdc6"></div>
<div style="left:129px;top:152px;width:14px;height:5px;background:#e4e1e6"></div>
<div style="left:143px;top:147px;width:14px;height:5px;background:#aaa5b0"></div>
<div style="left:143px;top:152px;width:14px;height:5px;background:#cfcbd3"></div>
<div style="left:157px;top:147px;width:12px;height:5px;background:#bfbac4"></div>
<div style="left:157px;top:152px;width:12px;height:5px;background:#e4e1e6"></div>
<div style="left:169px;top:147px;width:12px;height:5px;background:#d2ced6"></div>
<div style="left:169px;top:152px;width:12px;height:5px;background:#cfcbd3"></div>
</div></div>
<div style="left:21px;top:1160px;width:401px;height:16px;background:#f0f0f0"></div>
<div style="left:69px;top:1160px;width:137px;height:15px;background:#cdcdcd"></div>
<svg style="position:absolute;left:26px;top:1164px;overflow:visible" width="6" height="9" viewBox="0 0 6 9"><path d="M5.2 0.8L1.5 4.5L5.2 8.2" stroke="#444" stroke-width="2.2" fill="none"/></svg>
<svg style="position:absolute;left:410px;top:1164px;overflow:visible" width="6" height="9" viewBox="0 0 6 9"><path d="M0.8 0.8L4.5 4.5L0.8 8.2" stroke="#444" stroke-width="2.2" fill="none"/></svg>
<div style="left:422px;top:1160px;width:17px;height:17px;background:#f0f0f0"></div>
<div style="left:448px;top:531px;width:47px;height:89px;border:1px solid #bbb;box-sizing:border-box;background:#fff"></div>
<div style="left:448px;top:635px;width:47px;height:89px;border:1px solid #bbb;box-sizing:border-box;background:#fff"></div>
<svg style="position:absolute;left:464px;top:551px;overflow:visible" width="16" height="12" viewBox="0 0 16 12"><path d="M1 6h13M9 1l5 5-5 5" stroke="#111" stroke-width="2" fill="none"/></svg>
<svg style="position:absolute;left:462px;top:589px;overflow:visible" width="19" height="16" viewBox="0 0 19 16"><path d="M1.8 1v14" stroke="#111" stroke-width="3"/><path d="M4.5 8h12.5M11.5 2.5l5.5 5.5-5.5 5.5" stroke="#111" stroke-width="2.2" fill="none"/></svg>
<svg style="position:absolute;left:464px;top:655px;overflow:visible" width="16" height="12" viewBox="0 0 16 12"><path d="M15 6H2M7 1L2 6l5 5" stroke="#111" stroke-width="2" fill="none"/></svg>
<svg style="position:absolute;left:463px;top:693px;overflow:visible" width="19" height="16" viewBox="0 0 19 16"><path d="M17.2 1v14" stroke="#111" stroke-width="3"/><path d="M14.5 8H2M7.5 2.5L2 8l5.5 5.5" stroke="#111" stroke-width="2.2" fill="none"/></svg>
<div style="left:500px;top:4px;width:2px;height:1174px;background:#2a2a2a"></div>
<div style="left:20px;top:1176px;width:482px;height:1px;background:#111"></div>
<div style="left:504px;top:4px;width:73px;height:14px;background:#000"></div>
<div class="t" style="left:515px;top:2px;font-size:11px;color:#fff;line-height:12px">Estimation</div>
<div class="t" style="left:587px;top:2px;font-size:11px;color:#111;line-height:12px">Analyses des compilations</div>
<div class="t" style="left:733px;top:2px;font-size:11px;color:#111;line-height:12px">Rapport Client</div>
<div class="t" style="left:823px;top:2px;font-size:11px;color:#111;line-height:12px">Rapports Internes</div>
<svg style="position:absolute;left:519px;top:28px;overflow:visible" width="26" height="26" viewBox="0 0 26 26"><path d="M10 0h6v10h10v6H16v10h-6V16H0v-6h10z" fill="#13293a"/></svg>
<svg style="position:absolute;left:565px;top:25px;overflow:visible" width="25" height="32" viewBox="0 0 25 32"><rect x="0.6" y="0" width="23.2" height="2" fill="#13293a"/><path d="M12.4 5L24.7 15.2H19.8V31.7H5.4V15.2H0.2z" fill="#13293a"/><rect x="8" y="22" width="9.5" height="2.5" fill="#fff"/></svg>
<svg style="position:absolute;left:609px;top:25px;overflow:visible" width="25" height="32" viewBox="0 0 25 32"><path d="M5.6 0H18.7V17.4H24L12.5 26.7 0.5 17.4H5.6z" fill="#13293a"/><rect x="7.5" y="8" width="9.5" height="2.5" fill="#fff"/><rect x="1" y="30" width="23" height="2" fill="#13293a"/></svg>
<svg style="position:absolute;left:655px;top:25px;overflow:visible" width="25" height="32" viewBox="0 0 25 32"><path d="M5.8 0H18.9V15.2H23.8L11.8 24.3 0.6 15.2H5.8z" fill="#13293a"/><rect x="3.3" y="3" width="1.7" height="12" fill="#13293a"/><path d="M0.5 18.3L11.6 27.2 19.5 21.2" stroke="#13293a" stroke-width="2.2" fill="none"/><rect x="1" y="30" width="22" height="2" fill="#13293a"/></svg>
<svg style="position:absolute;left:697px;top:36px;overflow:visible" width="30" height="11" viewBox="0 0 30 11"><rect x="0" y="0" width="30" height="11" rx="5.5" fill="#13293a"/><circle cx="24.5" cy="5.5" r="3.8" fill="#fff"/></svg>
<div style="left:738px;top:25px;width:1px;height:44px;background:#ddd"></div>
<svg style="position:absolute;left:752px;top:25px;overflow:visible" width="26" height="32" viewBox="0 0 26 32"><path d="M6 0h13v15h7L12.5 27 0 15h6z" fill="#13293a"/><path d="M11 3h3v4h4v3h-4v4h-3v-4H7V7h4z" fill="#fff"/><rect x="0.5" y="29.5" width="24" height="2.5" fill="#13293a"/></svg>
<svg style="position:absolute;left:797px;top:26px;overflow:visible" width="26" height="31" viewBox="0 0 26 31"><path d="M1 26V3Q1 1 3 1H15.5" stroke="#13293a" stroke-width="1.8" fill="none"/><path d="M4.5 7Q4.5 4.7 6.8 4.7H16.5L25 13V27.5Q25 29.8 22.7 29.8H6.8Q4.5 29.8 4.5 27.5Z" stroke="#13293a" stroke-width="1.9" fill="#fff"/><path d="M16.5 4.7V12.5H25" stroke="#13293a" stroke-width="1.6" fill="none"/></svg>
<svg style="position:absolute;left:842px;top:26px;overflow:visible" width="26" height="30" viewBox="0 0 26 30"><path d="M6 1.5Q7 -0.5 8.8 1L18.8 19 15.6 20.8 10 11Q5.8 4 6 1.5Z" fill="#13293a"/><path d="M20 1.5Q19 -0.5 17.2 1L7.2 19 10.4 20.8 16 11Q20.2 4 20 1.5Z" fill="#13293a"/><circle cx="13" cy="15.3" r="0.8" fill="#fff"/><ellipse cx="5" cy="24.3" rx="3.6" ry="5.2" transform="rotate(35 5 24.3)" stroke="#13293a" stroke-width="2.6" fill="none"/><ellipse cx="21" cy="24.3" rx="3.6" ry="5.2" transform="rotate(-35 21 24.3)" stroke="#13293a" stroke-width="2.6" fill="none"/></svg>
<svg style="position:absolute;left:891px;top:27px;overflow:visible" width="22" height="28" viewBox="0 0 22 28"><path d="M4 3H1.3V21.8H7M13.5 3H16V8.5" stroke="#13293a" stroke-width="1.5" fill="none"/><path d="M4.5 3.4H13" stroke="#13293a" stroke-width="1.8"/><circle cx="8.7" cy="1.7" r="1.5" stroke="#13293a" stroke-width="1.2" fill="none"/><path d="M7.3 11.5L10 8.6H20.3V26.5H7.3Z" stroke="#13293a" stroke-width="1.5" fill="#fff"/><path d="M7.3 11.5H10V8.6" stroke="#13293a" stroke-width="1.2" fill="none"/></svg>
<div style="left:926px;top:25px;width:1px;height:44px;background:#ddd"></div>
<svg style="position:absolute;left:943px;top:26px;overflow:visible" width="21" height="28" viewBox="0 0 21 28"><rect x="0" y="0" width="21" height="2.4" fill="#1a1a1a"/><path d="M10.5 6v22" stroke="#1a1a1a" stroke-width="2.8"/><path d="M2 15l8.5-8.5L19 15" stroke="#1a1a1a" stroke-width="2.8" fill="none"/></svg>
<svg style="position:absolute;left:989px;top:30px;overflow:visible" width="19" height="24" viewBox="0 0 19 24"><path d="M9.5 2v22" stroke="#1a1a1a" stroke-width="2.8"/><path d="M1.5 10l8-8 8 8" stroke="#1a1a1a" stroke-width="2.8" fill="none"/></svg>
<svg style="position:absolute;left:1033px;top:30px;overflow:visible" width="19" height="24" viewBox="0 0 19 24"><path d="M9.5 0v22" stroke="#1a1a1a" stroke-width="2.8"/><path d="M1.5 14l8 8 8-8" stroke="#1a1a1a" stroke-width="2.8" fill="none"/></svg>
<svg style="position:absolute;left:1078px;top:27px;overflow:visible" width="21" height="28" viewBox="0 0 21 28"><path d="M10.5 0v22" stroke="#1a1a1a" stroke-width="2.8"/><path d="M2 13l8.5 8.5L19 13" stroke="#1a1a1a" stroke-width="2.8" fill="none"/><rect x="0" y="25.6" width="21" height="2.4" fill="#1a1a1a"/></svg>
<div style="left:1114px;top:25px;width:1px;height:44px;background:#ddd"></div>
<div class="t" style="left:560px;top:58px;width:123px;height:16px;line-height:16px;text-align:center;font-size:11px;color:#333">Ajouter / Supprimer</div>
<div class="t" style="left:781px;top:58px;width:100px;height:16px;line-height:16px;text-align:center;font-size:11px;color:#333">Copier / Coller</div>
<div class="t" style="left:960px;top:58px;width:120px;height:16px;line-height:16px;text-align:center;font-size:11px;color:#333">Repositionnement</div>
<div class="t" style="left:1172px;top:58px;width:100px;height:16px;line-height:16px;text-align:center;font-size:11px;color:#333">Affichage</div>
<div class="t" style="left:1352px;top:58px;width:100px;height:16px;line-height:16px;text-align:center;font-size:11px;color:#333">Zoom</div>
<div class="t" style="left:1535px;top:58px;width:100px;height:16px;line-height:16px;text-align:center;font-size:11px;color:#333">Verification</div>
<div class="t" style="left:1739px;top:58px;width:100px;height:16px;line-height:16px;text-align:center;font-size:11px;color:#333">Rapports</div>
<div class="t" style="left:1879px;top:58px;width:100px;height:16px;line-height:16px;text-align:center;font-size:11px;color:#333">TakeOff</div>
<div style="left:1125px;top:28px;width:150px;height:20px;border:1px solid #a0a0a0;box-sizing:border-box;background:#fff"></div>
<div style="left:1258px;top:29px;width:16px;height:18px;background:#ececec;border-left:1px solid #c8c8c8;box-sizing:border-box"></div>
<svg style="position:absolute;left:1262px;top:36px;overflow:visible" width="8" height="4" viewBox="0 0 8 4"><path d="M0 0h8L4 4z" fill="#666"/></svg>
<div class="t" style="left:1128px;top:28px;height:19px;line-height:19px;font-size:11px;color:#222">Français</div>
<svg style="position:absolute;left:1291px;top:30px;overflow:visible" width="26" height="22" viewBox="0 0 26 22"><rect x="1.2" y="1.2" width="23.6" height="19.6" rx="1.5" fill="none" stroke="#13293a" stroke-width="2.4"/><path d="M3.5 18.5l7-8 4 4 3-3 5 7z" fill="#13293a"/><circle cx="19" cy="6" r="2.2" fill="#13293a"/></svg>
<div style="left:1330px;top:25px;width:1px;height:44px;background:#ddd"></div>
<svg style="position:absolute;left:1344px;top:28px;overflow:visible" width="26" height="26" viewBox="0 0 26 26"><circle cx="10.5" cy="10.5" r="8.3" stroke="#13293a" stroke-width="3.4" fill="none"/><path d="M17 17l7.5 7.5" stroke="#13293a" stroke-width="4" stroke-linecap="round"/><rect x="6" y="9" width="9" height="3" fill="#13293a"/><rect x="9" y="6" width="3" height="9" fill="#13293a"/></svg>
<svg style="position:absolute;left:1389px;top:28px;overflow:visible" width="26" height="26" viewBox="0 0 26 26"><circle cx="10.5" cy="10.5" r="8.3" stroke="#13293a" stroke-width="3.4" fill="none"/><path d="M17 17l7.5 7.5" stroke="#13293a" stroke-width="4" stroke-linecap="round"/><rect x="6" y="9" width="9" height="3" fill="#13293a"/></svg>
<svg style="position:absolute;left:1434px;top:28px;overflow:visible" width="26" height="26" viewBox="0 0 26 26"><path d="M0 0h9L6 3l4 4-3 3-4-4-3 3z M26 0v9l-3-3-4 4-3-3 4-4-3-3z M0 26v-9l3 3 4-4 3 3-4 4 3 3z M26 26h-9l3-3-4-4 3-3 4 4 3-3z" fill="#13293a"/></svg>
<div style="left:1473px;top:25px;width:1px;height:44px;background:#ddd"></div>
<svg style="position:absolute;left:1488px;top:26px;overflow:visible" width="26" height="30" viewBox="0 0 26 30"><path d="M15 3.7A11.5 11.5 0 0 1 19.6 24.4" stroke="#2a2a2a" stroke-width="2.6" fill="none"/><path d="M6.4 5.6A11.5 11.5 0 0 0 11 26.3" stroke="#2a2a2a" stroke-width="2.6" fill="none"/><path d="M9 3.6L16 0v7.5z" fill="#2a2a2a"/><path d="M17.5 26.5L10.5 23v7.5z" fill="#2a2a2a"/><text x="13.2" y="20.2" font-family="Liberation Sans" font-size="12.5" text-anchor="middle" fill="#2a2a2a">$</text></svg>
<svg style="position:absolute;left:1541px;top:37px;overflow:visible" width="5" height="3" viewBox="0 0 5 3"><path d="M0 0h5L2.5 3z" fill="#111"/></svg>
<svg style="position:absolute;left:1636px;top:37px;overflow:visible" width="5" height="3" viewBox="0 0 5 3"><path d="M0 0h5L2.5 3z" fill="#111"/></svg>
<svg style="position:absolute;left:1856px;top:37px;overflow:visible" width="5" height="3" viewBox="0 0 5 3"><path d="M0 0h5L2.5 3z" fill="#111"/></svg>
<svg style="position:absolute;left:1950px;top:37px;overflow:visible" width="5" height="3" viewBox="0 0 5 3"><path d="M0 0h5L2.5 3z" fill="#111"/></svg>
<svg style="position:absolute;left:1570px;top:26px;overflow:visible" width="32" height="31" viewBox="0 0 32 31"><rect x="0" y="0" width="14.5" height="14" rx="2" fill="#13293a"/><rect x="17" y="0" width="15" height="14" rx="2" fill="#13293a"/><rect x="0" y="16.5" width="14.5" height="14.5" rx="2" fill="#13293a"/><rect x="17" y="16.5" width="15" height="14.5" rx="2" fill="#13293a"/><rect x="3" y="6" width="8.5" height="2.2" fill="#fff"/><rect x="20" y="3.5" width="9" height="2.2" fill="#fff"/><rect x="20" y="8" width="9" height="2.2" fill="#fff"/><path d="M7.2 19.5v8.5M3 23.7h8.5" stroke="#fff" stroke-width="2.2"/><path d="M21 20.5l7 7M28 20.5l-7 7" stroke="#fff" stroke-width="2"/></svg>
<svg style="position:absolute;left:1617px;top:32px;overflow:visible" width="12" height="12" viewBox="0 0 12 12"><defs><radialGradient id="gd" cx="0.4" cy="0.35" r="0.65"><stop offset="0" stop-color="#a8f0b0"/><stop offset="0.6" stop-color="#3cb850"/><stop offset="1" stop-color="#2a8a3a"/></radialGradient></defs><circle cx="6" cy="6" r="5.8" fill="url(#gd)"/></svg>
<svg style="position:absolute;left:1656px;top:29px;overflow:visible" width="32" height="25" viewBox="0 0 32 25"><path d="M2.5 12.5L11.5 21.5L29.5 3.5" stroke="#13293a" stroke-width="6.5" fill="none" stroke-linejoin="miter"/></svg>
<div style="left:1698px;top:25px;width:1px;height:44px;background:#ddd"></div>
<svg style="position:absolute;left:1716px;top:28px;overflow:visible" width="20" height="27" viewBox="0 0 20 27"><path d="M1 3q0-2 2-2h9.5L19 7.5V24q0 2-2 2H3q-2 0-2-2z" stroke="#13293a" stroke-width="1.8" fill="#fff"/><path d="M12.5 1v6.5H19" stroke="#13293a" stroke-width="1.4" fill="none"/><path d="M4.5 12.5h11M4.5 16h11M4.5 19.5h11" stroke="#13293a" stroke-width="1.6"/></svg>
<svg style="position:absolute;left:1756px;top:25px;overflow:visible" width="28" height="32" viewBox="0 0 28 32"><path d="M1.3 1.3h17l8.4 8.4v21H1.3z" stroke="#13293a" stroke-width="2.6" fill="#fff"/><path d="M18.3 1.3v8.4h8.4" stroke="#13293a" stroke-width="1.8" fill="none"/><path d="M5 12h5.5l3.3 5.2 3.3-5.2h5.2l-5.8 8.2 6.2 8.3h-5.5l-3.5-5.4-3.5 5.4H4.8l6.2-8.3z" fill="#13293a"/></svg>
<svg style="position:absolute;left:1799px;top:27px;overflow:visible" width="33" height="28" viewBox="0 0 33 28"><rect x="9" y="0" width="15" height="4" fill="#13293a"/><rect x="0" y="6" width="33" height="14" rx="3" fill="#13293a"/><circle cx="4.5" cy="10" r="1.5" fill="#fff"/><rect x="9.5" y="15.5" width="14" height="11" fill="#fff" stroke="#13293a" stroke-width="2.6"/></svg>
<div style="left:1882px;top:25px;width:1px;height:44px;background:#ddd"></div>
<svg style="position:absolute;left:1893px;top:32px;overflow:visible" width="32" height="18" viewBox="0 0 32 18"><g stroke="#f5820f" stroke-width="3.8" fill="none" stroke-linejoin="miter" stroke-miterlimit="4"><path d="M9.5 2.6L22.3 15.4" stroke-linecap="square"/><path d="M7.2 4.9L3.1 9 9.5 15.4 12.6 12.3"/><path d="M19.2 5.7L22.3 2.6 28.7 9 22.3 15.4"/></g></svg>
<div style="left:1976px;top:25px;width:1px;height:44px;background:#ddd"></div>
<div style="left:2179px;top:30px;width:13px;height:13px;border:1px solid #888;box-sizing:border-box;background:#fff"></div>
<div class="t" style="left:2196px;top:28px;height:17px;line-height:17px;font-size:11px;color:#333">Option special</div>
<div style="left:2178px;top:53px;width:176px;height:20px;border:1px solid #a0a0a0;box-sizing:border-box;background:#fff"></div>
<div style="left:2338px;top:54px;width:15px;height:18px;background:#ececec;border-left:1px solid #c8c8c8;box-sizing:border-box"></div>
<svg style="position:absolute;left:2342px;top:61px;overflow:visible" width="8" height="4" viewBox="0 0 8 4"><path d="M0 0h8L4 4z" fill="#666"/></svg>
<div class="t" style="left:2182px;top:53px;height:19px;line-height:19px;font-size:11px;color:#222">Assemblage et options</div>
<div style="left:513px;top:90px;width:63px;height:22px;background:#d9d9d9"></div>
<div style="left:579px;top:90px;width:1px;height:22px;background:#d0d0d0"></div>
<div style="left:641px;top:90px;width:1px;height:22px;background:#d0d0d0"></div>
<div style="left:701px;top:90px;width:1px;height:22px;background:#d0d0d0"></div>
<div style="left:772px;top:90px;width:1px;height:22px;background:#d0d0d0"></div>
<div style="left:862px;top:90px;width:1px;height:22px;background:#d0d0d0"></div>
<div style="left:967px;top:90px;width:1px;height:22px;background:#d0d0d0"></div>
<div style="left:1076px;top:90px;width:1px;height:22px;background:#d0d0d0"></div>
<div style="left:1112px;top:90px;width:1px;height:22px;background:#d0d0d0"></div>
<div class="t" style="left:513px;top:91px;width:63px;height:22px;line-height:22px;text-align:center;font-size:13px;font-weight:bold;color:#2d3848">Coûtant</div>
<div class="t" style="left:580px;top:91px;width:61px;height:22px;line-height:22px;text-align:center;font-size:13px;font-weight:bold;color:#2d3848">Admin.</div>
<div class="t" style="left:642px;top:91px;width:59px;height:22px;line-height:22px;text-align:center;font-size:13px;font-weight:bold;color:#2d3848">Profits</div>
<div class="t" style="left:702px;top:91px;width:70px;height:22px;line-height:22px;text-align:center;font-size:13px;font-weight:bold;color:#2d3848">Vendant</div>
<div class="t" style="left:773px;top:91px;width:89px;height:22px;line-height:22px;text-align:center;font-size:13px;font-weight:bold;color:#2d3848">Config.Opt.</div>
<div class="t" style="left:863px;top:91px;width:104px;height:22px;line-height:22px;text-align:center;font-size:13px;font-weight:bold;color:#2d3848">Config.Param.</div>
<div class="t" style="left:968px;top:91px;width:108px;height:22px;line-height:22px;text-align:center;font-size:13px;font-weight:bold;color:#2d3848">Rapport Client</div>
<svg style="position:absolute;left:1086px;top:93px;overflow:visible" width="16" height="16" viewBox="0 0 16 16"><path d="M8 0l1.6 2.4 2.8-.9.3 2.9 2.7 1.1-1.3 2.5 1.3 2.5-2.7 1.1-.3 2.9-2.8-.9L8 16l-1.6-2.4-2.8.9-.3-2.9L.6 10.5 1.9 8 .6 5.5l2.7-1.1.3-2.9 2.8.9z" fill="#13293a"/><circle cx="8" cy="8" r="2.8" fill="#fff"/></svg>
<svg style="position:absolute;left:1652px;top:91px;overflow:visible" width="19" height="19" viewBox="0 0 19 19"><path d="M0 2.5 Q9.5 -1.5 19 2.5 L12 10 V19 H7 V10 Z" fill="#13202a"/><ellipse cx="9.5" cy="2.8" rx="7.6" ry="1.5" fill="#fff"/><path d="M7.6 6.5l3.8 3.8m0-3.8l-3.8 3.8" stroke="#ccc" stroke-width="1.2"/></svg>
<svg style="position:absolute;left:1685px;top:93px;overflow:visible" width="17" height="16" viewBox="0 0 17 16"><path d="M14.5 6A6.8 6.8 0 0 0 3 3.5" stroke="#333" stroke-width="1.8" fill="none"/><path d="M16 1v5.5h-5.5z" fill="#333"/><path d="M2.5 10A6.8 6.8 0 0 0 14 12.5" stroke="#333" stroke-width="1.8" fill="none"/><path d="M1 15V9.5h5.5z" fill="#333"/></svg>
<div style="left:1711px;top:88px;width:836px;height:20px;border:1px solid #a0a0a0;box-sizing:border-box;background:#fff"></div>
<div style="left:2530px;top:89px;width:16px;height:18px;background:#ececec;border-left:1px solid #c8c8c8;box-sizing:border-box"></div>
<svg style="position:absolute;left:2534px;top:96px;overflow:visible" width="8" height="4" viewBox="0 0 8 4"><path d="M0 0h8L4 4z" fill="#555"/></svg>
<div class="t" style="left:1714px;top:88px;height:20px;line-height:20px;font-size:11px;color:#333">Rechercher un item</div>
<div style="left:508px;top:119px;width:2013px;height:32px;border:1px solid #6a6a6a;box-sizing:border-box;background:#fff"></div>
<div style="left:609px;top:120px;width:1px;height:30px;background:#111"></div>
<svg style="position:absolute;left:515px;top:126px;overflow:visible" width="20" height="20" viewBox="0 0 20 20"><circle cx="17.3" cy="2.9" r="2.6" fill="#666"/><path d="M13.3 4.6L15.7 7 5.5 17.2 3.1 14.8z" stroke="#666" stroke-width="1.5" fill="#fff"/><path d="M2.4 14.3L6 17.9 0.2 19.8z" fill="#666"/></svg>
<svg style="position:absolute;left:549px;top:128px;overflow:visible" width="16" height="16" viewBox="0 0 16 16"><path d="M0.9 0.9H13Q15 0.9 15 3V15H0.9z" fill="none" stroke="#666" stroke-width="1.7"/><rect x="3" y="1" width="9" height="5.3" fill="#666"/><rect x="8.3" y="2" width="2" height="3.3" fill="#fff"/></svg>
<svg style="position:absolute;left:583px;top:128px;overflow:visible" width="14" height="16" viewBox="0 0 14 16"><path d="M-0.2 5.7L5.4 0.6V3.6Q12.5 4 11.2 15.3Q10 8.5 5.4 8.2V11.8Z" fill="#666"/></svg>
<svg style="position:absolute;left:2533px;top:129px;overflow:visible" width="9" height="5" viewBox="0 0 9 5"><path d="M0 0h9L4.5 5z" fill="#666"/></svg>
<div style="left:504px;top:155px;width:2047px;height:4px;background:#000"></div>
<div style="left:504px;top:159px;width:2047px;height:21px;background:#1f2935;border-top:1px solid #777;box-sizing:border-box"></div>
<div class="t" style="left:505px;top:160px;width:12px;height:21px;line-height:21px;text-align:center;font-size:13px;font-weight:bold;color:#fff;letter-spacing:-0.2px">1</div>
<div style="left:517px;top:160px;width:1px;height:19px;background:#dcdcdc"></div>
<div class="t" style="left:518px;top:160px;width:12px;height:21px;line-height:21px;text-align:center;font-size:13px;font-weight:bold;color:#fff;letter-spacing:-0.2px">2</div>
<div style="left:530px;top:160px;width:1px;height:19px;background:#dcdcdc"></div>
<div class="t" style="left:531px;top:160px;width:12px;height:21px;line-height:21px;text-align:center;font-size:13px;font-weight:bold;color:#fff;letter-spacing:-0.2px">3</div>
<div style="left:543px;top:160px;width:1px;height:19px;background:#dcdcdc"></div>
<div class="t" style="left:544px;top:160px;width:12px;height:21px;line-height:21px;text-align:center;font-size:13px;font-weight:bold;color:#fff;letter-spacing:-0.2px">4</div>
<div style="left:556px;top:160px;width:1px;height:19px;background:#dcdcdc"></div>
<div class="t" style="left:557px;top:160px;width:12px;height:21px;line-height:21px;text-align:center;font-size:13px;font-weight:bold;color:#fff;letter-spacing:-0.2px">5</div>
<div style="left:569px;top:160px;width:1px;height:19px;background:#dcdcdc"></div>
<div class="t" style="left:570px;top:160px;width:12px;height:21px;line-height:21px;text-align:center;font-size:13px;font-weight:bold;color:#fff;letter-spacing:-0.2px">6</div>
<div style="left:582px;top:160px;width:1px;height:19px;background:#dcdcdc"></div>
<div class="t" style="left:583px;top:160px;width:12px;height:21px;line-height:21px;text-align:center;font-size:13px;font-weight:bold;color:#fff;letter-spacing:-0.2px">7</div>
<div style="left:595px;top:160px;width:1px;height:19px;background:#dcdcdc"></div>
<div class="t" style="left:596px;top:160px;width:12px;height:21px;line-height:21px;text-align:center;font-size:13px;font-weight:bold;color:#fff;letter-spacing:-0.2px">8</div>
<div style="left:608px;top:160px;width:1px;height:19px;background:#dcdcdc"></div>
<div class="t" style="left:609px;top:160px;width:12px;height:21px;line-height:21px;text-align:center;font-size:12px;font-weight:bold;color:#fff;letter-spacing:-0.2px">*</div>
<div style="left:621px;top:160px;width:1px;height:19px;background:#dcdcdc"></div>
<div class="t" style="left:622px;top:160px;width:49px;height:21px;line-height:21px;text-align:center;font-size:12px;font-weight:bold;color:#fff;letter-spacing:-0.2px">Modif.</div>
<div style="left:671px;top:160px;width:1px;height:19px;background:#dcdcdc"></div>
<div class="t" style="left:672px;top:160px;width:34px;height:21px;line-height:21px;text-align:center;font-size:12px;font-weight:bold;color:#fff;letter-spacing:-0.2px">Type</div>
<div style="left:706px;top:160px;width:1px;height:19px;background:#dcdcdc"></div>
<div class="t" style="left:707px;top:160px;width:302px;height:21px;line-height:21px;text-align:center;font-size:12px;font-weight:bold;color:#fff;letter-spacing:-0.2px">Nom</div>
<div style="left:1009px;top:160px;width:1px;height:19px;background:#dcdcdc"></div>
<div class="t" style="left:1010px;top:160px;width:50px;height:21px;line-height:21px;text-align:center;font-size:12px;font-weight:bold;color:#fff;letter-spacing:-0.2px">Alt.</div>
<div style="left:1060px;top:160px;width:1px;height:19px;background:#dcdcdc"></div>
<div class="t" style="left:1061px;top:160px;width:15px;height:21px;line-height:21px;text-align:center;font-size:12px;font-weight:bold;color:#fff;letter-spacing:-0.2px">+</div>
<div style="left:1076px;top:160px;width:1px;height:19px;background:#dcdcdc"></div>
<div class="t" style="left:1077px;top:160px;width:170px;height:21px;line-height:21px;text-align:center;font-size:12px;font-weight:bold;color:#fff;letter-spacing:-0.2px">Identification</div>
<div style="left:1247px;top:160px;width:1px;height:19px;background:#dcdcdc"></div>
<div class="t" style="left:1248px;top:160px;width:14px;height:21px;line-height:21px;text-align:center;font-size:12px;font-weight:bold;color:#fff;letter-spacing:-0.2px">+</div>
<div style="left:1262px;top:160px;width:1px;height:19px;background:#dcdcdc"></div>
<div class="t" style="left:1263px;top:160px;width:24px;height:21px;line-height:21px;text-align:center;font-size:12px;font-weight:bold;color:#fff;letter-spacing:-0.2px">O</div>
<div style="left:1287px;top:160px;width:1px;height:19px;background:#dcdcdc"></div>
<div class="t" style="left:1288px;top:160px;width:350px;height:21px;line-height:21px;text-align:center;font-size:12px;font-weight:bold;color:#fff;letter-spacing:-0.2px">Paramètres Optionnels</div>
<div style="left:1638px;top:160px;width:1px;height:19px;background:#dcdcdc"></div>
<div class="t" style="left:1639px;top:160px;width:30px;height:21px;line-height:21px;text-align:center;font-size:12px;font-weight:bold;color:#fff;letter-spacing:-0.2px">Incl.</div>
<div style="left:1669px;top:160px;width:1px;height:19px;background:#dcdcdc"></div>
<div class="t" style="left:1670px;top:160px;width:29px;height:21px;line-height:21px;text-align:center;font-size:12px;font-weight:bold;color:#fff;letter-spacing:-0.2px">C/C</div>
<div style="left:1699px;top:160px;width:1px;height:19px;background:#dcdcdc"></div>
<div class="t" style="left:1700px;top:160px;width:99px;height:21px;line-height:21px;text-align:center;font-size:12px;font-weight:bold;color:#45a9e6;letter-spacing:-0.2px">Coût U Mat.</div>
<div style="left:1799px;top:160px;width:1px;height:19px;background:#dcdcdc"></div>
<div class="t" style="left:1800px;top:160px;width:67px;height:21px;line-height:21px;text-align:center;font-size:12px;font-weight:bold;color:#f0863c;letter-spacing:-0.2px">% Diff.</div>
<div style="left:1867px;top:160px;width:1px;height:19px;background:#dcdcdc"></div>
<div class="t" style="left:1868px;top:160px;width:99px;height:21px;line-height:21px;text-align:center;font-size:12px;font-weight:bold;color:#f07e38;letter-spacing:-0.2px">H MO fin.</div>
<div style="left:1967px;top:160px;width:1px;height:19px;background:#dcdcdc"></div>
<div class="t" style="left:1968px;top:160px;width:99px;height:21px;line-height:21px;text-align:center;font-size:12px;font-weight:bold;color:#f08038;letter-spacing:-0.2px">Coût U MO</div>
<div style="left:2067px;top:160px;width:1px;height:19px;background:#dcdcdc"></div>
<div class="t" style="left:2068px;top:160px;width:99px;height:21px;line-height:21px;text-align:center;font-size:12px;font-weight:bold;color:#c49232;letter-spacing:-0.2px">Coût U Équip.</div>
<div style="left:2167px;top:160px;width:1px;height:19px;background:#dcdcdc"></div>
<div class="t" style="left:2168px;top:160px;width:99px;height:21px;line-height:21px;text-align:center;font-size:12px;font-weight:bold;color:#e8507e;letter-spacing:-0.2px">Coût U SC</div>
<div style="left:2267px;top:160px;width:1px;height:19px;background:#dcdcdc"></div>
<div class="t" style="left:2268px;top:160px;width:99px;height:21px;line-height:21px;text-align:center;font-size:12px;font-weight:bold;color:#1eaa8c;letter-spacing:-0.2px">Coût U Autre</div>
<div style="left:2367px;top:160px;width:1px;height:19px;background:#dcdcdc"></div>
<div class="t" style="left:2368px;top:160px;width:99px;height:21px;line-height:21px;text-align:center;font-size:12px;font-weight:bold;color:#fff;letter-spacing:-0.2px">Qté G fin.</div>
<div style="left:2467px;top:160px;width:1px;height:19px;background:#dcdcdc"></div>
<div class="t" style="left:2468px;top:160px;width:79px;height:21px;line-height:21px;text-align:center;font-size:12px;font-weight:bold;color:#fff;letter-spacing:-0.2px">Qté stat.</div>
<div style="left:2547px;top:160px;width:1px;height:19px;background:#dcdcdc"></div>
<div style="left:504px;top:180px;width:2047px;height:808px;background:#fff"></div>
<div style="left:504px;top:988px;width:2047px;height:148px;background:#ababab"></div>
<div style="left:504px;top:988px;width:2047px;height:1px;background:#666"></div>
<div style="left:505px;top:180px;width:2046px;height:20px;background:#fff"></div>
<div style="left:706px;top:180px;width:303px;height:20px;overflow:hidden"><div class="t" style="left:4px;top:0;line-height:20px;font-size:11px;color:#111"></div></div>
<div class="t" style="left:2265px;top:179px;width:200px;height:20px;line-height:20px;text-align:right;font-size:11px;color:#111">1,00</div>
<div style="left:505px;top:200px;width:2046px;height:20px;background:#2b5779"></div>
<div style="left:505px;top:219px;width:2046px;height:1px;background:#d6f3fb"></div>
<div style="left:706px;top:200px;width:303px;height:20px;overflow:hidden"><div class="t" style="left:4px;top:0;line-height:20px;font-size:11px;color:#fff">00 Total du projet</div></div>
<div class="t" style="left:1080px;top:200px;height:20px;line-height:20px;font-size:11px;color:#fff">Montant Forfaitaire</div>
<div class="t" style="left:2265px;top:199px;width:200px;height:20px;line-height:20px;text-align:right;font-size:11px;color:#fff">1,00</div>
<svg style="position:absolute;left:1678px;top:203px;overflow:visible" width="14" height="14" viewBox="0 0 14 14"><path d="M3.5 0h7v7h3.5L7 14 0 7h3.5z" fill="#0c1c2a"/><path d="M6 1.5h2v2h2v2H8v2H6v-2H4v-2h2z" fill="#fff"/></svg>
<div style="left:505px;top:220px;width:2046px;height:20px;background:#356b91"></div>
<div style="left:505px;top:239px;width:2046px;height:1px;background:#d6f3fb"></div>
<div style="left:706px;top:220px;width:303px;height:20px;overflow:hidden"><div class="t" style="left:4px;top:0;line-height:20px;font-size:11px;color:#fff">01 ASSURANCES</div></div>
<div class="t" style="left:2265px;top:219px;width:200px;height:20px;line-height:20px;text-align:right;font-size:11px;color:#fff">1,00</div>
<svg style="position:absolute;left:1678px;top:223px;overflow:visible" width="14" height="14" viewBox="0 0 14 14"><path d="M3.5 0h7v7h3.5L7 14 0 7h3.5z" fill="#0c1c2a"/><path d="M6 1.5h2v2h2v2H8v2H6v-2H4v-2h2z" fill="#fff"/></svg>
<div style="left:505px;top:240px;width:2046px;height:36px;background:#356b91"></div>
<div style="left:505px;top:275px;width:2046px;height:1px;background:#d6f3fb"></div>
<div style="left:706px;top:256px;width:303px;height:20px;overflow:hidden"><div class="t" style="left:4px;top:0;line-height:20px;font-size:11px;color:#fff">01 CAUTIONNEMENTS</div></div>
<div class="t" style="left:2265px;top:255px;width:200px;height:20px;line-height:20px;text-align:right;font-size:11px;color:#fff">1,00</div>
<svg style="position:absolute;left:1678px;top:259px;overflow:visible" width="14" height="14" viewBox="0 0 14 14"><path d="M3.5 0h7v7h3.5L7 14 0 7h3.5z" fill="#0c1c2a"/><path d="M6 1.5h2v2h2v2H8v2H6v-2H4v-2h2z" fill="#fff"/></svg>
<div class="t" style="left:1329px;top:243px;height:12px;line-height:12px;font-size:9px;color:#eef">TotalTTI</div>
<div class="t" style="left:1329px;top:259px;height:14px;line-height:14px;font-size:11px;color:#fff;text-decoration:underline">0,00</div>
<div class="t" style="left:1355px;top:259px;height:14px;line-height:14px;font-size:11px;color:#fff;text-decoration:underline">$</div>
<div style="left:505px;top:276px;width:2046px;height:20px;background:#356b91"></div>
<div style="left:505px;top:295px;width:2046px;height:1px;background:#d6f3fb"></div>
<div style="left:706px;top:276px;width:303px;height:20px;overflow:hidden"><div class="t" style="left:4px;top:0;line-height:20px;font-size:11px;color:#fff">01 FRAIS GÉNÉRAUX</div></div>
<div class="t" style="left:2265px;top:275px;width:200px;height:20px;line-height:20px;text-align:right;font-size:11px;color:#fff">1,00</div>
<svg style="position:absolute;left:1678px;top:279px;overflow:visible" width="14" height="14" viewBox="0 0 14 14"><path d="M3.5 0h7v7h3.5L7 14 0 7h3.5z" fill="#0c1c2a"/><path d="M6 1.5h2v2h2v2H8v2H6v-2H4v-2h2z" fill="#fff"/></svg>
<div style="left:505px;top:296px;width:2046px;height:20px;background:#356b91"></div>
<div style="left:505px;top:315px;width:2046px;height:1px;background:#d6f3fb"></div>
<div style="left:706px;top:296px;width:303px;height:20px;overflow:hidden"><div class="t" style="left:4px;top:0;line-height:20px;font-size:11px;color:#fff">02 CONDITIONS EXISTANTES - DÉMOLITION</div></div>
<div class="t" style="left:2265px;top:295px;width:200px;height:20px;line-height:20px;text-align:right;font-size:11px;color:#fff">1,00</div>
<svg style="position:absolute;left:1678px;top:299px;overflow:visible" width="14" height="14" viewBox="0 0 14 14"><path d="M3.5 0h7v7h3.5L7 14 0 7h3.5z" fill="#0c1c2a"/><path d="M6 1.5h2v2h2v2H8v2H6v-2H4v-2h2z" fill="#fff"/></svg>
<div style="left:505px;top:316px;width:2046px;height:20px;background:#356b91"></div>
<div style="left:505px;top:335px;width:2046px;height:1px;background:#d6f3fb"></div>
<div style="left:706px;top:316px;width:303px;height:20px;overflow:hidden"><div class="t" style="left:4px;top:0;line-height:20px;font-size:11px;color:#fff">03 BÉTON</div></div>
<div class="t" style="left:2265px;top:315px;width:200px;height:20px;line-height:20px;text-align:right;font-size:11px;color:#fff">1,00</div>
<svg style="position:absolute;left:1678px;top:319px;overflow:visible" width="14" height="14" viewBox="0 0 14 14"><path d="M3.5 0h7v7h3.5L7 14 0 7h3.5z" fill="#0c1c2a"/><path d="M6 1.5h2v2h2v2H8v2H6v-2H4v-2h2z" fill="#fff"/></svg>
<div style="left:505px;top:336px;width:2046px;height:20px;background:#356b91"></div>
<div style="left:505px;top:355px;width:2046px;height:1px;background:#d6f3fb"></div>
<div style="left:706px;top:336px;width:303px;height:20px;overflow:hidden"><div class="t" style="left:4px;top:0;line-height:20px;font-size:11px;color:#fff">04 MAÇONNERIE</div></div>
<div class="t" style="left:2265px;top:335px;width:200px;height:20px;line-height:20px;text-align:right;font-size:11px;color:#fff">1,00</div>
<svg style="position:absolute;left:1678px;top:339px;overflow:visible" width="14" height="14" viewBox="0 0 14 14"><path d="M3.5 0h7v7h3.5L7 14 0 7h3.5z" fill="#0c1c2a"/><path d="M6 1.5h2v2h2v2H8v2H6v-2H4v-2h2z" fill="#fff"/></svg>
<div style="left:505px;top:356px;width:2046px;height:20px;background:#356b91"></div>
<div style="left:505px;top:375px;width:2046px;height:1px;background:#d6f3fb"></div>
<div style="left:706px;top:356px;width:303px;height:20px;overflow:hidden"><div class="t" style="left:4px;top:0;line-height:20px;font-size:11px;color:#fff">05 MÉTAUX</div></div>
<div class="t" style="left:2265px;top:355px;width:200px;height:20px;line-height:20px;text-align:right;font-size:11px;color:#fff">1,00</div>
<svg style="position:absolute;left:1678px;top:359px;overflow:visible" width="14" height="14" viewBox="0 0 14 14"><path d="M3.5 0h7v7h3.5L7 14 0 7h3.5z" fill="#0c1c2a"/><path d="M6 1.5h2v2h2v2H8v2H6v-2H4v-2h2z" fill="#fff"/></svg>
<div style="left:505px;top:376px;width:2046px;height:20px;background:#356b91"></div>
<div style="left:505px;top:395px;width:2046px;height:1px;background:#d6f3fb"></div>
<div style="left:706px;top:376px;width:303px;height:20px;overflow:hidden"><div class="t" style="left:4px;top:0;line-height:20px;font-size:11px;color:#fff">06 BOIS ET PLASTIQUES</div></div>
<div class="t" style="left:2265px;top:375px;width:200px;height:20px;line-height:20px;text-align:right;font-size:11px;color:#fff">1,00</div>
<svg style="position:absolute;left:1678px;top:379px;overflow:visible" width="14" height="14" viewBox="0 0 14 14"><path d="M3.5 0h7v7h3.5L7 14 0 7h3.5z" fill="#0c1c2a"/><path d="M6 1.5h2v2h2v2H8v2H6v-2H4v-2h2z" fill="#fff"/></svg>
<div style="left:505px;top:396px;width:2046px;height:20px;background:#356b91"></div>
<div style="left:505px;top:415px;width:2046px;height:1px;background:#d6f3fb"></div>
<div style="left:706px;top:396px;width:303px;height:20px;overflow:hidden"><div class="t" style="left:4px;top:0;line-height:20px;font-size:11px;color:#fff">07 ISOLATION ET ÉTANCHÉITÉ</div></div>
<div class="t" style="left:2265px;top:395px;width:200px;height:20px;line-height:20px;text-align:right;font-size:11px;color:#fff">1,00</div>
<svg style="position:absolute;left:1678px;top:399px;overflow:visible" width="14" height="14" viewBox="0 0 14 14"><path d="M3.5 0h7v7h3.5L7 14 0 7h3.5z" fill="#0c1c2a"/><path d="M6 1.5h2v2h2v2H8v2H6v-2H4v-2h2z" fill="#fff"/></svg>
<div style="left:505px;top:416px;width:2046px;height:20px;background:#356b91"></div>
<div style="left:505px;top:435px;width:2046px;height:1px;background:#d6f3fb"></div>
<div style="left:706px;top:416px;width:303px;height:20px;overflow:hidden"><div class="t" style="left:4px;top:0;line-height:20px;font-size:11px;color:#fff">08 OUVERTURES</div></div>
<div class="t" style="left:2265px;top:415px;width:200px;height:20px;line-height:20px;text-align:right;font-size:11px;color:#fff">1,00</div>
<div style="left:505px;top:436px;width:2046px;height:20px;background:#3f7fb0"></div>
<div style="left:505px;top:455px;width:2046px;height:1px;background:#d6f3fb"></div>
<div style="left:706px;top:436px;width:303px;height:20px;overflow:hidden"><div class="t" style="left:4px;top:0;line-height:20px;font-size:11px;color:#fff">08 11 00  Portes et cadres en acier</div></div>
<div class="t" style="left:2265px;top:435px;width:200px;height:20px;line-height:20px;text-align:right;font-size:11px;color:#fff">1,00</div>
<div style="left:505px;top:456px;width:2046px;height:20px;background:#3f7fb0"></div>
<div style="left:505px;top:475px;width:2046px;height:1px;background:#d6f3fb"></div>
<div style="left:706px;top:456px;width:303px;height:20px;overflow:hidden"><div class="t" style="left:4px;top:0;line-height:20px;font-size:11px;color:#fff">08 11 16  Portes et cadres en aluminium</div></div>
<div class="t" style="left:2265px;top:455px;width:200px;height:20px;line-height:20px;text-align:right;font-size:11px;color:#fff">1,00</div>
<div style="left:505px;top:476px;width:2046px;height:20px;background:#3f7fb0"></div>
<div style="left:505px;top:495px;width:2046px;height:1px;background:#d6f3fb"></div>
<div style="left:706px;top:476px;width:303px;height:20px;overflow:hidden"><div class="t" style="left:4px;top:0;line-height:20px;font-size:11px;color:#fff">08 14 10  Portes en bois</div></div>
<div class="t" style="left:2265px;top:475px;width:200px;height:20px;line-height:20px;text-align:right;font-size:11px;color:#fff">1,00</div>
<div style="left:505px;top:496px;width:2046px;height:20px;background:#3f7fb0"></div>
<div style="left:505px;top:515px;width:2046px;height:1px;background:#d6f3fb"></div>
<div style="left:706px;top:496px;width:303px;height:20px;overflow:hidden"><div class="t" style="left:4px;top:0;line-height:20px;font-size:11px;color:#fff">08 33 00 Portes et grilles enroulables</div></div>
<div class="t" style="left:2265px;top:495px;width:200px;height:20px;line-height:20px;text-align:right;font-size:11px;color:#fff">1,00</div>
<div style="left:505px;top:516px;width:2046px;height:20px;background:#3f7fb0"></div>
<div style="left:505px;top:535px;width:2046px;height:1px;background:#d6f3fb"></div>
<div style="left:505px;top:517px;width:2046px;height:2px;background:#000"></div>
<div style="left:505px;top:533px;width:2046px;height:2px;background:#000"></div>
<div style="left:706px;top:516px;width:303px;height:20px;overflow:hidden"><div class="t" style="left:4px;top:0;line-height:20px;font-size:11px;color:#fff">08 44 13 Murs rideaux vitrés</div></div>
<div class="t" style="left:2265px;top:515px;width:200px;height:20px;line-height:20px;text-align:right;font-size:11px;color:#fff">1,00</div>
<div style="left:505px;top:536px;width:2046px;height:36px;background:#c9cad4"></div>
<div style="left:505px;top:571px;width:2046px;height:1px;background:#e4e4ec"></div>
<div style="left:706px;top:552px;width:303px;height:20px;overflow:hidden"><div class="t" style="left:4px;top:0;line-height:20px;font-size:11px;color:#111">08.11 Fenêtres ext.</div></div>
<div class="t" style="left:2265px;top:551px;width:200px;height:20px;line-height:20px;text-align:right;font-size:11px;color:#111">1,00</div>
<div style="left:505px;top:572px;width:2046px;height:36px;background:#c9cad4"></div>
<div style="left:505px;top:607px;width:2046px;height:1px;background:#e4e4ec"></div>
<div style="left:706px;top:588px;width:303px;height:20px;overflow:hidden"><div class="t" style="left:4px;top:0;line-height:20px;font-size:11px;color:#111">ST -Murs Rideaux</div></div>
<div class="t" style="left:2265px;top:587px;width:200px;height:20px;line-height:20px;text-align:right;font-size:11px;color:#111">1,00</div>
<svg style="position:absolute;left:679px;top:589px;overflow:visible" width="21" height="18" viewBox="0 0 21 18"><circle cx="7" cy="2.5" r="2.3" fill="#111"/><path d="M4 6h6l2 4 5-3 .8 1.2-6 4.3L10 10v8H8v-5H6v5H4z" fill="#111"/><rect x="0" y="14" width="4" height="4" fill="#111"/><rect x="14" y="14" width="7" height="4" fill="#111"/></svg>
<div style="left:505px;top:608px;width:2046px;height:20px;background:#3f7fb0"></div>
<div style="left:505px;top:627px;width:2046px;height:1px;background:#d6f3fb"></div>
<div style="left:706px;top:608px;width:303px;height:20px;overflow:hidden"><div class="t" style="left:4px;top:0;line-height:20px;font-size:11px;color:#fff">08 50 00 Fenêtres en aluminium</div></div>
<div class="t" style="left:2265px;top:607px;width:200px;height:20px;line-height:20px;text-align:right;font-size:11px;color:#fff">1,00</div>
<div style="left:505px;top:628px;width:2046px;height:20px;background:#3f7fb0"></div>
<div style="left:505px;top:647px;width:2046px;height:1px;background:#d6f3fb"></div>
<div style="left:706px;top:628px;width:303px;height:20px;overflow:hidden"><div class="t" style="left:4px;top:0;line-height:20px;font-size:11px;color:#fff">08 53 00  Fenêtres hybrides</div></div>
<div class="t" style="left:2265px;top:627px;width:200px;height:20px;line-height:20px;text-align:right;font-size:11px;color:#fff">1,00</div>
<div style="left:505px;top:648px;width:2046px;height:20px;background:#3f7fb0"></div>
<div style="left:505px;top:667px;width:2046px;height:1px;background:#d6f3fb"></div>
<div style="left:706px;top:648px;width:303px;height:20px;overflow:hidden"><div class="t" style="left:4px;top:0;line-height:20px;font-size:11px;color:#fff">08 70 00 Quincaillerie architecturale</div></div>
<div class="t" style="left:2265px;top:647px;width:200px;height:20px;line-height:20px;text-align:right;font-size:11px;color:#fff">1,00</div>
<div style="left:505px;top:668px;width:2046px;height:20px;background:#3f7fb0"></div>
<div style="left:505px;top:687px;width:2046px;height:1px;background:#d6f3fb"></div>
<div style="left:706px;top:668px;width:303px;height:20px;overflow:hidden"><div class="t" style="left:4px;top:0;line-height:20px;font-size:11px;color:#fff">08 71 00  Quincaillerie de portes</div></div>
<div class="t" style="left:2265px;top:667px;width:200px;height:20px;line-height:20px;text-align:right;font-size:11px;color:#fff">1,00</div>
<div style="left:505px;top:688px;width:2046px;height:20px;background:#3f7fb0"></div>
<div style="left:505px;top:707px;width:2046px;height:1px;background:#d6f3fb"></div>
<div style="left:706px;top:688px;width:303px;height:20px;overflow:hidden"><div class="t" style="left:4px;top:0;line-height:20px;font-size:11px;color:#fff">08 80 00  Vitrages</div></div>
<div class="t" style="left:2265px;top:687px;width:200px;height:20px;line-height:20px;text-align:right;font-size:11px;color:#fff">1,00</div>
<div style="left:505px;top:708px;width:2046px;height:20px;background:#3f7fb0"></div>
<div style="left:505px;top:727px;width:2046px;height:1px;background:#d6f3fb"></div>
<div style="left:706px;top:708px;width:303px;height:20px;overflow:hidden"><div class="t" style="left:4px;top:0;line-height:20px;font-size:11px;color:#fff">08 87 23 Pellicules et films</div></div>
<div class="t" style="left:2265px;top:707px;width:200px;height:20px;line-height:20px;text-align:right;font-size:11px;color:#fff">1,00</div>
<div style="left:505px;top:728px;width:2046px;height:20px;background:#3f7fb0"></div>
<div style="left:505px;top:747px;width:2046px;height:1px;background:#d6f3fb"></div>
<div style="left:706px;top:728px;width:303px;height:20px;overflow:hidden"><div class="t" style="left:4px;top:0;line-height:20px;font-size:11px;color:#fff">08 90 00 Persiennes architecturales</div></div>
<div class="t" style="left:2265px;top:727px;width:200px;height:20px;line-height:20px;text-align:right;font-size:11px;color:#fff">1,00</div>
<div style="left:505px;top:748px;width:2046px;height:20px;background:#356b91"></div>
<div style="left:505px;top:767px;width:2046px;height:1px;background:#d6f3fb"></div>
<div style="left:706px;top:748px;width:303px;height:20px;overflow:hidden"><div class="t" style="left:4px;top:0;line-height:20px;font-size:11px;color:#fff">09 FINITIONS</div></div>
<div class="t" style="left:2265px;top:747px;width:200px;height:20px;line-height:20px;text-align:right;font-size:11px;color:#fff">1,00</div>
<svg style="position:absolute;left:1678px;top:751px;overflow:visible" width="14" height="14" viewBox="0 0 14 14"><path d="M3.5 0h7v7h3.5L7 14 0 7h3.5z" fill="#0c1c2a"/><path d="M6 1.5h2v2h2v2H8v2H6v-2H4v-2h2z" fill="#fff"/></svg>
<div style="left:505px;top:768px;width:2046px;height:20px;background:#356b91"></div>
<div style="left:505px;top:787px;width:2046px;height:1px;background:#d6f3fb"></div>
<div style="left:706px;top:768px;width:303px;height:20px;overflow:hidden"><div class="t" style="left:4px;top:0;line-height:20px;font-size:11px;color:#fff">10 PRODUITS SPÉCIAUX</div></div>
<div class="t" style="left:2265px;top:767px;width:200px;height:20px;line-height:20px;text-align:right;font-size:11px;color:#fff">1,00</div>
<svg style="position:absolute;left:1678px;top:771px;overflow:visible" width="14" height="14" viewBox="0 0 14 14"><path d="M3.5 0h7v7h3.5L7 14 0 7h3.5z" fill="#0c1c2a"/><path d="M6 1.5h2v2h2v2H8v2H6v-2H4v-2h2z" fill="#fff"/></svg>
<div style="left:505px;top:788px;width:2046px;height:20px;background:#356b91"></div>
<div style="left:505px;top:807px;width:2046px;height:1px;background:#d6f3fb"></div>
<div style="left:706px;top:788px;width:303px;height:20px;overflow:hidden"><div class="t" style="left:4px;top:0;line-height:20px;font-size:11px;color:#fff">11 MATÉRIEL ET ÉQUIPEMENTS</div></div>
<div class="t" style="left:2265px;top:787px;width:200px;height:20px;line-height:20px;text-align:right;font-size:11px;color:#fff">1,00</div>
<svg style="position:absolute;left:1678px;top:791px;overflow:visible" width="14" height="14" viewBox="0 0 14 14"><path d="M3.5 0h7v7h3.5L7 14 0 7h3.5z" fill="#0c1c2a"/><path d="M6 1.5h2v2h2v2H8v2H6v-2H4v-2h2z" fill="#fff"/></svg>
<div style="left:505px;top:808px;width:2046px;height:20px;background:#356b91"></div>
<div style="left:505px;top:827px;width:2046px;height:1px;background:#d6f3fb"></div>
<div style="left:706px;top:808px;width:303px;height:20px;overflow:hidden"><div class="t" style="left:4px;top:0;line-height:20px;font-size:11px;color:#fff">12 AMEUBLEMENT ET DÉCORATION</div></div>
<div class="t" style="left:2265px;top:807px;width:200px;height:20px;line-height:20px;text-align:right;font-size:11px;color:#fff">1,00</div>
<svg style="position:absolute;left:1678px;top:811px;overflow:visible" width="14" height="14" viewBox="0 0 14 14"><path d="M3.5 0h7v7h3.5L7 14 0 7h3.5z" fill="#0c1c2a"/><path d="M6 1.5h2v2h2v2H8v2H6v-2H4v-2h2z" fill="#fff"/></svg>
<div style="left:505px;top:828px;width:2046px;height:20px;background:#356b91"></div>
<div style="left:505px;top:847px;width:2046px;height:1px;background:#d6f3fb"></div>
<div style="left:706px;top:828px;width:303px;height:20px;overflow:hidden"><div class="t" style="left:4px;top:0;line-height:20px;font-size:11px;color:#fff">14 SYSTÈMES TRANSPORTEURS</div></div>
<div class="t" style="left:2265px;top:827px;width:200px;height:20px;line-height:20px;text-align:right;font-size:11px;color:#fff">1,00</div>
<svg style="position:absolute;left:1678px;top:831px;overflow:visible" width="14" height="14" viewBox="0 0 14 14"><path d="M3.5 0h7v7h3.5L7 14 0 7h3.5z" fill="#0c1c2a"/><path d="M6 1.5h2v2h2v2H8v2H6v-2H4v-2h2z" fill="#fff"/></svg>
<div style="left:505px;top:848px;width:2046px;height:20px;background:#356b91"></div>
<div style="left:505px;top:867px;width:2046px;height:1px;background:#d6f3fb"></div>
<div style="left:706px;top:848px;width:303px;height:20px;overflow:hidden"><div class="t" style="left:4px;top:0;line-height:20px;font-size:11px;color:#fff">15 MÉCANIQUE</div></div>
<div class="t" style="left:2265px;top:847px;width:200px;height:20px;line-height:20px;text-align:right;font-size:11px;color:#fff">1,00</div>
<svg style="position:absolute;left:1678px;top:851px;overflow:visible" width="14" height="14" viewBox="0 0 14 14"><path d="M3.5 0h7v7h3.5L7 14 0 7h3.5z" fill="#0c1c2a"/><path d="M6 1.5h2v2h2v2H8v2H6v-2H4v-2h2z" fill="#fff"/></svg>
<div style="left:505px;top:868px;width:2046px;height:20px;background:#356b91"></div>
<div style="left:505px;top:887px;width:2046px;height:1px;background:#d6f3fb"></div>
<div style="left:706px;top:868px;width:303px;height:20px;overflow:hidden"><div class="t" style="left:4px;top:0;line-height:20px;font-size:11px;color:#fff">16 ÉLECTRICITÉ (ou Division 26)</div></div>
<div class="t" style="left:2265px;top:867px;width:200px;height:20px;line-height:20px;text-align:right;font-size:11px;color:#fff">1,00</div>
<svg style="position:absolute;left:1678px;top:871px;overflow:visible" width="14" height="14" viewBox="0 0 14 14"><path d="M3.5 0h7v7h3.5L7 14 0 7h3.5z" fill="#0c1c2a"/><path d="M6 1.5h2v2h2v2H8v2H6v-2H4v-2h2z" fill="#fff"/></svg>
<div style="left:505px;top:888px;width:2046px;height:20px;background:#356b91"></div>
<div style="left:505px;top:907px;width:2046px;height:1px;background:#d6f3fb"></div>
<div style="left:706px;top:888px;width:303px;height:20px;overflow:hidden"><div class="t" style="left:4px;top:0;line-height:20px;font-size:11px;color:#fff">27 COMMUNICATIONS</div></div>
<div class="t" style="left:2265px;top:887px;width:200px;height:20px;line-height:20px;text-align:right;font-size:11px;color:#fff">1,00</div>
<svg style="position:absolute;left:1678px;top:891px;overflow:visible" width="14" height="14" viewBox="0 0 14 14"><path d="M3.5 0h7v7h3.5L7 14 0 7h3.5z" fill="#0c1c2a"/><path d="M6 1.5h2v2h2v2H8v2H6v-2H4v-2h2z" fill="#fff"/></svg>
<div style="left:505px;top:908px;width:2046px;height:20px;background:#356b91"></div>
<div style="left:505px;top:927px;width:2046px;height:1px;background:#d6f3fb"></div>
<div style="left:706px;top:908px;width:303px;height:20px;overflow:hidden"><div class="t" style="left:4px;top:0;line-height:20px;font-size:11px;color:#fff">28 SÉCURITÉ ET PROTECTIONS ÉLECTRONIQUES</div></div>
<div class="t" style="left:2265px;top:907px;width:200px;height:20px;line-height:20px;text-align:right;font-size:11px;color:#fff">1,00</div>
<svg style="position:absolute;left:1678px;top:911px;overflow:visible" width="14" height="14" viewBox="0 0 14 14"><path d="M3.5 0h7v7h3.5L7 14 0 7h3.5z" fill="#0c1c2a"/><path d="M6 1.5h2v2h2v2H8v2H6v-2H4v-2h2z" fill="#fff"/></svg>
<div style="left:505px;top:928px;width:2046px;height:20px;background:#356b91"></div>
<div style="left:505px;top:947px;width:2046px;height:1px;background:#d6f3fb"></div>
<div style="left:706px;top:928px;width:303px;height:20px;overflow:hidden"><div class="t" style="left:4px;top:0;line-height:20px;font-size:11px;color:#fff">31 TERRASSEMENTS</div></div>
<div class="t" style="left:2265px;top:927px;width:200px;height:20px;line-height:20px;text-align:right;font-size:11px;color:#fff">1,00</div>
<svg style="position:absolute;left:1678px;top:931px;overflow:visible" width="14" height="14" viewBox="0 0 14 14"><path d="M3.5 0h7v7h3.5L7 14 0 7h3.5z" fill="#0c1c2a"/><path d="M6 1.5h2v2h2v2H8v2H6v-2H4v-2h2z" fill="#fff"/></svg>
<div style="left:505px;top:948px;width:2046px;height:20px;background:#356b91"></div>
<div style="left:505px;top:967px;width:2046px;height:1px;background:#d6f3fb"></div>
<div style="left:706px;top:948px;width:303px;height:20px;overflow:hidden"><div class="t" style="left:4px;top:0;line-height:20px;font-size:11px;color:#fff">32 AMÉNAGEMENTS EXTÉRIEURS</div></div>
<div class="t" style="left:2265px;top:947px;width:200px;height:20px;line-height:20px;text-align:right;font-size:11px;color:#fff">1,00</div>
<svg style="position:absolute;left:1678px;top:951px;overflow:visible" width="14" height="14" viewBox="0 0 14 14"><path d="M3.5 0h7v7h3.5L7 14 0 7h3.5z" fill="#0c1c2a"/><path d="M6 1.5h2v2h2v2H8v2H6v-2H4v-2h2z" fill="#fff"/></svg>
<div style="left:505px;top:968px;width:2046px;height:20px;background:#356b91"></div>
<div style="left:505px;top:987px;width:2046px;height:1px;background:#d6f3fb"></div>
<div style="left:706px;top:968px;width:303px;height:20px;overflow:hidden"><div class="t" style="left:4px;top:0;line-height:20px;font-size:11px;color:#fff">33 SERVICES D&#x27;UTILITÉS</div></div>
<div class="t" style="left:2265px;top:967px;width:200px;height:20px;line-height:20px;text-align:right;font-size:11px;color:#fff">1,00</div>
<svg style="position:absolute;left:1678px;top:971px;overflow:visible" width="14" height="14" viewBox="0 0 14 14"><path d="M3.5 0h7v7h3.5L7 14 0 7h3.5z" fill="#0c1c2a"/><path d="M6 1.5h2v2h2v2H8v2H6v-2H4v-2h2z" fill="#fff"/></svg>
<div style="left:1287px;top:180px;width:1px;height:808px;background:#555"></div>
<div style="left:511px;top:194px;width:1px;height:16px;background:#0a0a14"></div>
<div style="left:511px;top:209px;width:9px;height:1px;background:#0a0a14"></div>
<div style="left:524px;top:214px;width:1px;height:764px;background:#0a0a14"></div>
<div style="left:524px;top:229px;width:9px;height:1px;background:#0a0a14"></div>
<div style="left:524px;top:265px;width:9px;height:1px;background:#0a0a14"></div>
<div style="left:524px;top:285px;width:9px;height:1px;background:#0a0a14"></div>
<div style="left:524px;top:305px;width:9px;height:1px;background:#0a0a14"></div>
<div style="left:524px;top:325px;width:9px;height:1px;background:#0a0a14"></div>
<div style="left:524px;top:345px;width:9px;height:1px;background:#0a0a14"></div>
<div style="left:524px;top:365px;width:9px;height:1px;background:#0a0a14"></div>
<div style="left:524px;top:385px;width:9px;height:1px;background:#0a0a14"></div>
<div style="left:524px;top:405px;width:9px;height:1px;background:#0a0a14"></div>
<div style="left:524px;top:425px;width:9px;height:1px;background:#0a0a14"></div>
<div style="left:524px;top:757px;width:9px;height:1px;background:#0a0a14"></div>
<div style="left:524px;top:777px;width:9px;height:1px;background:#0a0a14"></div>
<div style="left:524px;top:797px;width:9px;height:1px;background:#0a0a14"></div>
<div style="left:524px;top:817px;width:9px;height:1px;background:#0a0a14"></div>
<div style="left:524px;top:837px;width:9px;height:1px;background:#0a0a14"></div>
<div style="left:524px;top:857px;width:9px;height:1px;background:#0a0a14"></div>
<div style="left:524px;top:877px;width:9px;height:1px;background:#0a0a14"></div>
<div style="left:524px;top:897px;width:9px;height:1px;background:#0a0a14"></div>
<div style="left:524px;top:917px;width:9px;height:1px;background:#0a0a14"></div>
<div style="left:524px;top:937px;width:9px;height:1px;background:#0a0a14"></div>
<div style="left:524px;top:957px;width:9px;height:1px;background:#0a0a14"></div>
<div style="left:524px;top:977px;width:9px;height:1px;background:#0a0a14"></div>
<div style="left:537px;top:429px;width:1px;height:309px;background:#0a0a14"></div>
<div style="left:537px;top:445px;width:9px;height:1px;background:#0a0a14"></div>
<div style="left:537px;top:465px;width:9px;height:1px;background:#0a0a14"></div>
<div style="left:537px;top:485px;width:9px;height:1px;background:#0a0a14"></div>
<div style="left:537px;top:505px;width:9px;height:1px;background:#0a0a14"></div>
<div style="left:537px;top:525px;width:9px;height:1px;background:#0a0a14"></div>
<div style="left:537px;top:617px;width:9px;height:1px;background:#0a0a14"></div>
<div style="left:537px;top:637px;width:9px;height:1px;background:#0a0a14"></div>
<div style="left:537px;top:657px;width:9px;height:1px;background:#0a0a14"></div>
<div style="left:537px;top:677px;width:9px;height:1px;background:#0a0a14"></div>
<div style="left:537px;top:697px;width:9px;height:1px;background:#0a0a14"></div>
<div style="left:537px;top:717px;width:9px;height:1px;background:#0a0a14"></div>
<div style="left:537px;top:737px;width:9px;height:1px;background:#0a0a14"></div>
<div style="left:550px;top:529px;width:1px;height:69px;background:#0a0a14"></div>
<div style="left:550px;top:543px;width:13px;height:1px;background:#0a0a14"></div>
<div style="left:550px;top:561px;width:9px;height:1px;background:#0a0a14"></div>
<div style="left:550px;top:579px;width:13px;height:1px;background:#0a0a14"></div>
<div style="left:550px;top:597px;width:13px;height:1px;background:#0a0a14"></div>
<svg style="position:absolute;left:507px;top:185px;overflow:visible" width="9" height="9" viewBox="0 0 9 9"><rect x="0.5" y="0.5" width="8" height="8" fill="#f4f4f4" stroke="#9a9a9a" stroke-width="1"/><rect x="2" y="4" width="5" height="1.2" fill="#222a3a"/></svg>
<svg style="position:absolute;left:520px;top:205px;overflow:visible" width="9" height="9" viewBox="0 0 9 9"><rect x="0.5" y="0.5" width="8" height="8" fill="#f4f4f4" stroke="#c8ccd8" stroke-width="1"/><rect x="2" y="4" width="5" height="1.2" fill="#222a3a"/></svg>
<svg style="position:absolute;left:533px;top:225px;overflow:visible" width="9" height="9" viewBox="0 0 9 9"><rect x="0.5" y="0.5" width="8" height="8" fill="#f4f4f4" stroke="#c8ccd8" stroke-width="1"/><rect x="2" y="4" width="5" height="1.2" fill="#222a3a"/><rect x="3.9" y="2" width="1.2" height="5" fill="#222a3a"/></svg>
<svg style="position:absolute;left:533px;top:261px;overflow:visible" width="9" height="9" viewBox="0 0 9 9"><rect x="0.5" y="0.5" width="8" height="8" fill="#f4f4f4" stroke="#c8ccd8" stroke-width="1"/><rect x="2" y="4" width="5" height="1.2" fill="#222a3a"/><rect x="3.9" y="2" width="1.2" height="5" fill="#222a3a"/></svg>
<svg style="position:absolute;left:533px;top:281px;overflow:visible" width="9" height="9" viewBox="0 0 9 9"><rect x="0.5" y="0.5" width="8" height="8" fill="#f4f4f4" stroke="#c8ccd8" stroke-width="1"/><rect x="2" y="4" width="5" height="1.2" fill="#222a3a"/><rect x="3.9" y="2" width="1.2" height="5" fill="#222a3a"/></svg>
<svg style="position:absolute;left:533px;top:301px;overflow:visible" width="9" height="9" viewBox="0 0 9 9"><rect x="0.5" y="0.5" width="8" height="8" fill="#f4f4f4" stroke="#c8ccd8" stroke-width="1"/><rect x="2" y="4" width="5" height="1.2" fill="#222a3a"/><rect x="3.9" y="2" width="1.2" height="5" fill="#222a3a"/></svg>
<svg style="position:absolute;left:533px;top:321px;overflow:visible" width="9" height="9" viewBox="0 0 9 9"><rect x="0.5" y="0.5" width="8" height="8" fill="#f4f4f4" stroke="#c8ccd8" stroke-width="1"/><rect x="2" y="4" width="5" height="1.2" fill="#222a3a"/><rect x="3.9" y="2" width="1.2" height="5" fill="#222a3a"/></svg>
<svg style="position:absolute;left:533px;top:341px;overflow:visible" width="9" height="9" viewBox="0 0 9 9"><rect x="0.5" y="0.5" width="8" height="8" fill="#f4f4f4" stroke="#c8ccd8" stroke-width="1"/><rect x="2" y="4" width="5" height="1.2" fill="#222a3a"/><rect x="3.9" y="2" width="1.2" height="5" fill="#222a3a"/></svg>
<svg style="position:absolute;left:533px;top:361px;overflow:visible" width="9" height="9" viewBox="0 0 9 9"><rect x="0.5" y="0.5" width="8" height="8" fill="#f4f4f4" stroke="#c8ccd8" stroke-width="1"/><rect x="2" y="4" width="5" height="1.2" fill="#222a3a"/><rect x="3.9" y="2" width="1.2" height="5" fill="#222a3a"/></svg>
<svg style="position:absolute;left:533px;top:381px;overflow:visible" width="9" height="9" viewBox="0 0 9 9"><rect x="0.5" y="0.5" width="8" height="8" fill="#f4f4f4" stroke="#c8ccd8" stroke-width="1"/><rect x="2" y="4" width="5" height="1.2" fill="#222a3a"/><rect x="3.9" y="2" width="1.2" height="5" fill="#222a3a"/></svg>
<svg style="position:absolute;left:533px;top:401px;overflow:visible" width="9" height="9" viewBox="0 0 9 9"><rect x="0.5" y="0.5" width="8" height="8" fill="#f4f4f4" stroke="#c8ccd8" stroke-width="1"/><rect x="2" y="4" width="5" height="1.2" fill="#222a3a"/><rect x="3.9" y="2" width="1.2" height="5" fill="#222a3a"/></svg>
<svg style="position:absolute;left:533px;top:421px;overflow:visible" width="9" height="9" viewBox="0 0 9 9"><rect x="0.5" y="0.5" width="8" height="8" fill="#f4f4f4" stroke="#c8ccd8" stroke-width="1"/><rect x="2" y="4" width="5" height="1.2" fill="#222a3a"/></svg>
<svg style="position:absolute;left:546px;top:441px;overflow:visible" width="9" height="9" viewBox="0 0 9 9"><rect x="0.5" y="0.5" width="8" height="8" fill="#f4f4f4" stroke="#c8ccd8" stroke-width="1"/><rect x="2" y="4" width="5" height="1.2" fill="#222a3a"/><rect x="3.9" y="2" width="1.2" height="5" fill="#222a3a"/></svg>
<svg style="position:absolute;left:546px;top:461px;overflow:visible" width="9" height="9" viewBox="0 0 9 9"><rect x="0.5" y="0.5" width="8" height="8" fill="#f4f4f4" stroke="#c8ccd8" stroke-width="1"/><rect x="2" y="4" width="5" height="1.2" fill="#222a3a"/><rect x="3.9" y="2" width="1.2" height="5" fill="#222a3a"/></svg>
<svg style="position:absolute;left:546px;top:481px;overflow:visible" width="9" height="9" viewBox="0 0 9 9"><rect x="0.5" y="0.5" width="8" height="8" fill="#f4f4f4" stroke="#c8ccd8" stroke-width="1"/><rect x="2" y="4" width="5" height="1.2" fill="#222a3a"/><rect x="3.9" y="2" width="1.2" height="5" fill="#222a3a"/></svg>
<svg style="position:absolute;left:546px;top:501px;overflow:visible" width="9" height="9" viewBox="0 0 9 9"><rect x="0.5" y="0.5" width="8" height="8" fill="#f4f4f4" stroke="#c8ccd8" stroke-width="1"/><rect x="2" y="4" width="5" height="1.2" fill="#222a3a"/><rect x="3.9" y="2" width="1.2" height="5" fill="#222a3a"/></svg>
<svg style="position:absolute;left:546px;top:521px;overflow:visible" width="9" height="9" viewBox="0 0 9 9"><rect x="0.5" y="0.5" width="8" height="8" fill="#f4f4f4" stroke="#c8ccd8" stroke-width="1"/><rect x="2" y="4" width="5" height="1.2" fill="#222a3a"/></svg>
<svg style="position:absolute;left:559px;top:557px;overflow:visible" width="9" height="9" viewBox="0 0 9 9"><rect x="0.5" y="0.5" width="8" height="8" fill="#f4f4f4" stroke="#c8ccd8" stroke-width="1"/><rect x="2" y="4" width="5" height="1.2" fill="#222a3a"/><rect x="3.9" y="2" width="1.2" height="5" fill="#222a3a"/></svg>
<svg style="position:absolute;left:546px;top:613px;overflow:visible" width="9" height="9" viewBox="0 0 9 9"><rect x="0.5" y="0.5" width="8" height="8" fill="#f4f4f4" stroke="#c8ccd8" stroke-width="1"/><rect x="2" y="4" width="5" height="1.2" fill="#222a3a"/><rect x="3.9" y="2" width="1.2" height="5" fill="#222a3a"/></svg>
<svg style="position:absolute;left:546px;top:633px;overflow:visible" width="9" height="9" viewBox="0 0 9 9"><rect x="0.5" y="0.5" width="8" height="8" fill="#f4f4f4" stroke="#c8ccd8" stroke-width="1"/><rect x="2" y="4" width="5" height="1.2" fill="#222a3a"/><rect x="3.9" y="2" width="1.2" height="5" fill="#222a3a"/></svg>
<svg style="position:absolute;left:546px;top:673px;overflow:visible" width="9" height="9" viewBox="0 0 9 9"><rect x="0.5" y="0.5" width="8" height="8" fill="#f4f4f4" stroke="#c8ccd8" stroke-width="1"/><rect x="2" y="4" width="5" height="1.2" fill="#222a3a"/><rect x="3.9" y="2" width="1.2" height="5" fill="#222a3a"/></svg>
<svg style="position:absolute;left:546px;top:693px;overflow:visible" width="9" height="9" viewBox="0 0 9 9"><rect x="0.5" y="0.5" width="8" height="8" fill="#f4f4f4" stroke="#c8ccd8" stroke-width="1"/><rect x="2" y="4" width="5" height="1.2" fill="#222a3a"/><rect x="3.9" y="2" width="1.2" height="5" fill="#222a3a"/></svg>
<svg style="position:absolute;left:546px;top:733px;overflow:visible" width="9" height="9" viewBox="0 0 9 9"><rect x="0.5" y="0.5" width="8" height="8" fill="#f4f4f4" stroke="#c8ccd8" stroke-width="1"/><rect x="2" y="4" width="5" height="1.2" fill="#222a3a"/><rect x="3.9" y="2" width="1.2" height="5" fill="#222a3a"/></svg>
<svg style="position:absolute;left:533px;top:753px;overflow:visible" width="9" height="9" viewBox="0 0 9 9"><rect x="0.5" y="0.5" width="8" height="8" fill="#f4f4f4" stroke="#c8ccd8" stroke-width="1"/><rect x="2" y="4" width="5" height="1.2" fill="#222a3a"/><rect x="3.9" y="2" width="1.2" height="5" fill="#222a3a"/></svg>
<svg style="position:absolute;left:533px;top:773px;overflow:visible" width="9" height="9" viewBox="0 0 9 9"><rect x="0.5" y="0.5" width="8" height="8" fill="#f4f4f4" stroke="#c8ccd8" stroke-width="1"/><rect x="2" y="4" width="5" height="1.2" fill="#222a3a"/><rect x="3.9" y="2" width="1.2" height="5" fill="#222a3a"/></svg>
<svg style="position:absolute;left:533px;top:793px;overflow:visible" width="9" height="9" viewBox="0 0 9 9"><rect x="0.5" y="0.5" width="8" height="8" fill="#f4f4f4" stroke="#c8ccd8" stroke-width="1"/><rect x="2" y="4" width="5" height="1.2" fill="#222a3a"/><rect x="3.9" y="2" width="1.2" height="5" fill="#222a3a"/></svg>
<svg style="position:absolute;left:533px;top:813px;overflow:visible" width="9" height="9" viewBox="0 0 9 9"><rect x="0.5" y="0.5" width="8" height="8" fill="#f4f4f4" stroke="#c8ccd8" stroke-width="1"/><rect x="2" y="4" width="5" height="1.2" fill="#222a3a"/><rect x="3.9" y="2" width="1.2" height="5" fill="#222a3a"/></svg>
<svg style="position:absolute;left:533px;top:833px;overflow:visible" width="9" height="9" viewBox="0 0 9 9"><rect x="0.5" y="0.5" width="8" height="8" fill="#f4f4f4" stroke="#c8ccd8" stroke-width="1"/><rect x="2" y="4" width="5" height="1.2" fill="#222a3a"/><rect x="3.9" y="2" width="1.2" height="5" fill="#222a3a"/></svg>
<svg style="position:absolute;left:533px;top:853px;overflow:visible" width="9" height="9" viewBox="0 0 9 9"><rect x="0.5" y="0.5" width="8" height="8" fill="#f4f4f4" stroke="#c8ccd8" stroke-width="1"/><rect x="2" y="4" width="5" height="1.2" fill="#222a3a"/><rect x="3.9" y="2" width="1.2" height="5" fill="#222a3a"/></svg>
<svg style="position:absolute;left:533px;top:873px;overflow:visible" width="9" height="9" viewBox="0 0 9 9"><rect x="0.5" y="0.5" width="8" height="8" fill="#f4f4f4" stroke="#c8ccd8" stroke-width="1"/><rect x="2" y="4" width="5" height="1.2" fill="#222a3a"/><rect x="3.9" y="2" width="1.2" height="5" fill="#222a3a"/></svg>
<svg style="position:absolute;left:533px;top:893px;overflow:visible" width="9" height="9" viewBox="0 0 9 9"><rect x="0.5" y="0.5" width="8" height="8" fill="#f4f4f4" stroke="#c8ccd8" stroke-width="1"/><rect x="2" y="4" width="5" height="1.2" fill="#222a3a"/><rect x="3.9" y="2" width="1.2" height="5" fill="#222a3a"/></svg>
<svg style="position:absolute;left:533px;top:913px;overflow:visible" width="9" height="9" viewBox="0 0 9 9"><rect x="0.5" y="0.5" width="8" height="8" fill="#f4f4f4" stroke="#c8ccd8" stroke-width="1"/><rect x="2" y="4" width="5" height="1.2" fill="#222a3a"/><rect x="3.9" y="2" width="1.2" height="5" fill="#222a3a"/></svg>
<svg style="position:absolute;left:533px;top:933px;overflow:visible" width="9" height="9" viewBox="0 0 9 9"><rect x="0.5" y="0.5" width="8" height="8" fill="#f4f4f4" stroke="#c8ccd8" stroke-width="1"/><rect x="2" y="4" width="5" height="1.2" fill="#222a3a"/><rect x="3.9" y="2" width="1.2" height="5" fill="#222a3a"/></svg>
<svg style="position:absolute;left:533px;top:953px;overflow:visible" width="9" height="9" viewBox="0 0 9 9"><rect x="0.5" y="0.5" width="8" height="8" fill="#f4f4f4" stroke="#c8ccd8" stroke-width="1"/><rect x="2" y="4" width="5" height="1.2" fill="#222a3a"/><rect x="3.9" y="2" width="1.2" height="5" fill="#222a3a"/></svg>
<svg style="position:absolute;left:533px;top:973px;overflow:visible" width="9" height="9" viewBox="0 0 9 9"><rect x="0.5" y="0.5" width="8" height="8" fill="#f4f4f4" stroke="#c8ccd8" stroke-width="1"/><rect x="2" y="4" width="5" height="1.2" fill="#222a3a"/><rect x="3.9" y="2" width="1.2" height="5" fill="#222a3a"/></svg>
<div style="left:708px;top:182px;width:10px;height:5px;background:#c8c4ce"></div>
<div style="left:708px;top:187px;width:10px;height:5px;background:#c4c0cc"></div>
<div style="left:718px;top:182px;width:12px;height:5px;background:#a8a4b0"></div>
<div style="left:718px;top:187px;width:12px;height:5px;background:#dcd9e0"></div>
<div style="left:730px;top:182px;width:12px;height:5px;background:#d4d0d8"></div>
<div style="left:730px;top:187px;width:12px;height:5px;background:#c4c0cc"></div>
<div style="left:742px;top:182px;width:10px;height:5px;background:#b8b4c0"></div>
<div style="left:742px;top:187px;width:10px;height:5px;background:#dcd9e0"></div>
<div style="left:752px;top:182px;width:12px;height:5px;background:#e0dde4"></div>
<div style="left:752px;top:187px;width:12px;height:5px;background:#c4c0cc"></div>
<div style="left:764px;top:182px;width:12px;height:5px;background:#b0acb8"></div>
<div style="left:764px;top:187px;width:12px;height:5px;background:#dcd9e0"></div>
<div style="left:776px;top:182px;width:10px;height:5px;background:#c4c0ca"></div>
<div style="left:776px;top:187px;width:10px;height:5px;background:#c4c0cc"></div>
<div style="left:786px;top:182px;width:12px;height:5px;background:#a8a4ae"></div>
<div style="left:786px;top:187px;width:12px;height:5px;background:#dcd9e0"></div>
<div style="left:798px;top:182px;width:12px;height:5px;background:#d0ccd4"></div>
<div style="left:798px;top:187px;width:12px;height:5px;background:#c4c0cc"></div>
<div style="left:810px;top:182px;width:10px;height:5px;background:#bcb8c2"></div>
<div style="left:810px;top:187px;width:10px;height:5px;background:#dcd9e0"></div>
<div style="left:820px;top:182px;width:10px;height:5px;background:#d8d4dc"></div>
<div style="left:820px;top:187px;width:10px;height:5px;background:#c4c0cc"></div>
<div style="left:706px;top:195px;width:127px;height:5px;background:#dfe6ee"></div>
<div style="left:505px;top:1136px;width:2046px;height:17px;background:#f0f0f0"></div>
<div style="left:522px;top:1136px;width:1582px;height:16px;background:#cdcdcd"></div>
<svg style="position:absolute;left:507px;top:1140px;overflow:visible" width="6" height="9" viewBox="0 0 6 9"><path d="M5.2 0.8L1.5 4.5L5.2 8.2" stroke="#444" stroke-width="2.2" fill="none"/></svg>
<svg style="position:absolute;left:2539px;top:1140px;overflow:visible" width="6" height="9" viewBox="0 0 6 9"><path d="M0.8 0.8L4.5 4.5L0.8 8.2" stroke="#444" stroke-width="2.2" fill="none"/></svg>
<div style="left:504px;top:1153px;width:2047px;height:1px;background:#555"></div>
<div style="left:2550px;top:155px;width:1px;height:999px;background:#555"></div>
<div style="left:504px;top:155px;width:1px;height:999px;background:#555"></div>
<div style="left:502px;top:1154px;width:2051px;height:24px;background:#efefef"></div>
<div style="left:506px;top:1156px;width:117px;height:21px;border:1px solid #888;box-sizing:border-box;background:#fff"></div>
<div class="t" style="left:506px;top:1157px;width:117px;height:21px;line-height:21px;text-align:center;font-size:11px;color:#222">Descriptions / Notes</div>
<div style="left:622px;top:1156px;width:74px;height:21px;border:1px solid #888;box-sizing:border-box;background:#fff"></div>
<div class="t" style="left:622px;top:1157px;width:74px;height:21px;line-height:21px;text-align:center;font-size:11px;color:#222">Paramètres</div>
<div style="left:695px;top:1156px;width:57px;height:21px;border:1px solid #888;box-sizing:border-box;background:#fff"></div>
<div class="t" style="left:695px;top:1157px;width:57px;height:21px;line-height:21px;text-align:center;font-size:11px;color:#222">Coûtant</div>
<div style="left:751px;top:1156px;width:133px;height:21px;border:1px solid #888;box-sizing:border-box;background:#fff"></div>
<div class="t" style="left:751px;top:1157px;width:133px;height:21px;line-height:21px;text-align:center;font-size:11px;color:#222">Erreurs / Améliorations</div>
<div style="left:883px;top:1156px;width:58px;height:21px;border:1px solid #888;box-sizing:border-box;background:#fff"></div>
<div class="t" style="left:883px;top:1157px;width:58px;height:21px;line-height:21px;text-align:center;font-size:11px;color:#222">Résumé</div>
<div style="left:940px;top:1156px;width:67px;height:21px;border:1px solid #888;box-sizing:border-box;background:#fff"></div>
<div class="t" style="left:940px;top:1157px;width:67px;height:21px;line-height:21px;text-align:center;font-size:11px;color:#222">Utilisation</div>
<div style="left:825px;top:319px;width:895px;height:421px;background:#fff"></div>
<div style="left:825px;top:319px;width:895px;height:43px;background:#222934"></div>
<div style="left:834px;top:332px;width:15px;height:15px;background:#0e1c2a"></div>
<svg style="position:absolute;left:836px;top:336px;overflow:visible" width="11" height="7" viewBox="0 0 11 7"><path d="M5.5 3.5L3 1 0.8 3.5 3 6zM5.5 3.5L8 1l2.2 2.5L8 6z" fill="none" stroke="#e6c21a" stroke-width="1.5" stroke-linejoin="round"/></svg>
<div class="t" style="left:854px;top:330px;height:22px;line-height:22px;font-size:14px;color:#fff;letter-spacing:-0.3px">Nouvel item</div>
<svg style="position:absolute;left:1691px;top:335px;overflow:visible" width="11" height="11" viewBox="0 0 11 11"><path d="M0.5 0.5l10 10M10.5 0.5l-10 10" stroke="#8a8f96" stroke-width="1"/></svg>
<div class="t" style="left:837px;top:375px;height:18px;line-height:18px;font-size:11px;color:#444">Type</div>
<div class="t" style="left:837px;top:430px;height:18px;line-height:18px;font-size:11px;color:#444">Code Class.</div>
<div class="t" style="left:837px;top:455px;height:18px;line-height:18px;font-size:11px;color:#444">Code</div>
<div class="t" style="left:838px;top:492px;height:18px;line-height:18px;font-size:11px;color:#444">Nom</div>
<div class="t" style="left:838px;top:551px;height:18px;line-height:18px;font-size:11px;color:#444">Description</div>
<div style="left:1079px;top:432px;width:130px;height:19px;background:#c9d7ee;border:1px solid #b8c0cc;border-left:none;box-sizing:border-box"></div>
<div style="left:1079px;top:457px;width:130px;height:19px;background:#efefef;border:1px solid #c4c4c4;border-left:none;box-sizing:border-box"></div>
<div style="left:925px;top:494px;width:284px;height:50px;background:#c9d7ee;border:1px solid #b8c0cc;box-sizing:border-box"></div>
<div style="left:1190px;top:495px;width:18px;height:48px;background:#f0f0f0"></div>
<svg style="position:absolute;left:1195px;top:499px;overflow:visible" width="8" height="5" viewBox="0 0 8 5"><path d="M0.5 4.5L4 1l3.5 3.5" stroke="#999" stroke-width="1.3" fill="none"/></svg>
<svg style="position:absolute;left:1195px;top:532px;overflow:visible" width="8" height="5" viewBox="0 0 8 5"><path d="M0.5 0.5L4 4l3.5-3.5" stroke="#999" stroke-width="1.3" fill="none"/></svg>
<div style="left:925px;top:553px;width:284px;height:149px;background:#c9d7ee;border:1px solid #b8c0cc;box-sizing:border-box"></div>
<div style="left:1190px;top:554px;width:18px;height:146px;background:#f0f0f0"></div>
<svg style="position:absolute;left:1195px;top:558px;overflow:visible" width="8" height="5" viewBox="0 0 8 5"><path d="M0.5 4.5L4 1l3.5 3.5" stroke="#999" stroke-width="1.3" fill="none"/></svg>
<svg style="position:absolute;left:1195px;top:689px;overflow:visible" width="8" height="5" viewBox="0 0 8 5"><path d="M0.5 0.5L4 4l3.5-3.5" stroke="#999" stroke-width="1.3" fill="none"/></svg>
<div style="left:925px;top:375px;width:155px;height:21px;border:1px solid #a8a8a8;box-sizing:border-box;background:#fff"></div>
<div style="left:1064px;top:376px;width:15px;height:19px;background:linear-gradient(#fbc890,#f29a40);border:1px solid #e08a30;box-sizing:border-box"></div>
<svg style="position:absolute;left:1068px;top:384px;overflow:visible" width="7" height="4" viewBox="0 0 7 4"><path d="M0.5 0.5L3.5 3.5L6.5 0.5" stroke="#fff" stroke-width="1.2" fill="none"/></svg>
<div style="left:928px;top:378px;width:42px;height:15px;background:#0a6fd6"></div>
<div class="t" style="left:929px;top:376px;height:18px;line-height:18px;font-size:11px;color:#fff">Matériel</div>
<div style="left:1107px;top:376px;width:102px;height:23px;border-right:2px solid #111;border-bottom:2px solid #111;box-sizing:border-box;background:#fff"></div>
<div class="t" style="left:1107px;top:376px;width:100px;height:22px;line-height:22px;text-align:center;font-size:11px;color:#333">Modèle de calculs</div>
<svg style="position:absolute;left:1209px;top:376px;overflow:visible" width="15" height="15" viewBox="0 0 15 15"><defs><radialGradient id="ig" cx="0.35" cy="0.3" r="0.75"><stop offset="0" stop-color="#6a8cff"/><stop offset="1" stop-color="#1030a8"/></radialGradient></defs><circle cx="7.5" cy="7.5" r="7.2" fill="url(#ig)"/><circle cx="7.5" cy="3.8" r="1.4" fill="#fff"/><path d="M5.6 6.2h2.8v4.8h1v1.4H5.6V11h1V7.6h-1z" fill="#fff"/></svg>
<div style="left:922px;top:404px;width:3px;height:22px;border:1px solid #888;border-right:none;box-sizing:border-box;background:#fff"></div>
<div style="left:925px;top:398px;width:155px;height:197px;border:1px solid #646464;box-sizing:border-box;background:#fff"></div>
<div class="t" style="left:928px;top:399px;height:15px;line-height:15px;font-size:11px;color:#111">Assemblage</div>
<div class="t" style="left:928px;top:414px;height:15px;line-height:15px;font-size:11px;color:#111">Matériel</div>
<div class="t" style="left:928px;top:429px;height:15px;line-height:15px;font-size:11px;color:#111">Tâche</div>
<div class="t" style="left:928px;top:444px;height:15px;line-height:15px;font-size:11px;color:#111">Sous-contrat</div>
<div class="t" style="left:928px;top:459px;height:15px;line-height:15px;font-size:11px;color:#111">Total</div>
<div class="t" style="left:928px;top:474px;height:15px;line-height:15px;font-size:11px;color:#111">Équipement</div>
<div class="t" style="left:928px;top:489px;height:15px;line-height:15px;font-size:11px;color:#111">Compétence</div>
<div class="t" style="left:928px;top:504px;height:15px;line-height:15px;font-size:11px;color:#111">Modèle</div>
<div class="t" style="left:928px;top:519px;height:15px;line-height:15px;font-size:11px;color:#111">Autre coût</div>
<div style="left:926px;top:534px;width:153px;height:15px;background:#0a6fd6"></div>
<div class="t" style="left:928px;top:534px;height:15px;line-height:15px;font-size:11px;color:#fff">Libre</div>
<div class="t" style="left:928px;top:549px;height:15px;line-height:15px;font-size:11px;color:#111">Dimension</div>
<div class="t" style="left:928px;top:564px;height:15px;line-height:15px;font-size:11px;color:#111">Information</div>
<div class="t" style="left:928px;top:579px;height:15px;line-height:15px;font-size:11px;color:#111">Bordereau</div>
<div style="left:2115px;top:417px;width:4px;height:375px;background:#3b76a4"></div>
<div style="left:1225px;top:375px;width:890px;height:417px;background:#fff;box-shadow:1px 1px 2px rgba(0,0,0,0.15)"></div>
<div style="left:1225px;top:375px;width:890px;height:42px;background:#222934"></div>
<div style="left:1231px;top:388px;width:14px;height:14px;background:#0e1c2a"></div>
<svg style="position:absolute;left:1233px;top:391px;overflow:visible" width="11" height="7" viewBox="0 0 11 7"><path d="M5.5 3.5L3 1 0.8 3.5 3 6zM5.5 3.5L8 1l2.2 2.5L8 6z" fill="none" stroke="#e6c21a" stroke-width="1.5" stroke-linejoin="round"/></svg>
<div class="t" style="left:1250px;top:385px;height:22px;line-height:22px;font-size:14px;color:#fff;letter-spacing:-0.3px">Nouvel item</div>
<svg style="position:absolute;left:2086px;top:390px;overflow:visible" width="11" height="11" viewBox="0 0 11 11"><path d="M0.5 0.5l10 10M10.5 0.5l-10 10" stroke="#8a8f96" stroke-width="1"/></svg>
<div class="t" style="left:1233px;top:430px;height:18px;line-height:18px;font-size:11px;color:#444">Type</div>
<div class="t" style="left:1233px;top:485px;height:18px;line-height:18px;font-size:11px;color:#444">Code Class.</div>
<div class="t" style="left:1233px;top:510px;height:18px;line-height:18px;font-size:11px;color:#444">Code</div>
<div class="t" style="left:1234px;top:547px;height:18px;line-height:18px;font-size:11px;color:#444">Nom</div>
<div class="t" style="left:1234px;top:606px;height:18px;line-height:18px;font-size:11px;color:#444">Description</div>
<div style="left:1321px;top:430px;width:155px;height:21px;border:1px solid #a8a8a8;box-sizing:border-box;background:#c9d7ee"></div>
<div style="left:1459px;top:431px;width:16px;height:19px;background:#dde5f2;border-left:1px solid #c8cfdc;box-sizing:border-box"></div>
<svg style="position:absolute;left:1463px;top:439px;overflow:visible" width="8" height="4" viewBox="0 0 8 4"><path d="M0 0h8L4 4z" fill="#999"/></svg>
<div class="t" style="left:1323px;top:431px;height:19px;line-height:19px;font-size:11px;color:#111">Libre</div>
<div style="left:1503px;top:431px;width:102px;height:24px;border-right:2px solid #111;border-bottom:2px solid #111;box-sizing:border-box;background:#fff"></div>
<div class="t" style="left:1503px;top:431px;width:100px;height:23px;line-height:23px;text-align:center;font-size:11px;color:#333">Modèle de calculs</div>
<svg style="position:absolute;left:1605px;top:432px;overflow:visible" width="15" height="15" viewBox="0 0 15 15"><defs><radialGradient id="ig" cx="0.35" cy="0.3" r="0.75"><stop offset="0" stop-color="#6a8cff"/><stop offset="1" stop-color="#1030a8"/></radialGradient></defs><circle cx="7.5" cy="7.5" r="7.2" fill="url(#ig)"/><circle cx="7.5" cy="3.8" r="1.4" fill="#fff"/><path d="M5.6 6.2h2.8v4.8h1v1.4H5.6V11h1V7.6h-1z" fill="#fff"/></svg>
<div style="left:1320px;top:460px;width:113px;height:22px;border:1px solid #222;box-sizing:border-box;background:#fff"></div>
<div class="t" style="left:1320px;top:460px;width:113px;height:22px;line-height:22px;text-align:center;font-size:11px;color:#222">Item catalogue</div>
<div style="left:1320px;top:487px;width:285px;height:19px;background:#c9d7ee;border:1px solid #b0b8c4;box-sizing:border-box"></div>
<div class="t" style="left:1323px;top:487px;height:19px;line-height:19px;font-size:11px;color:#111">08A1</div>
<div style="left:1320px;top:512px;width:285px;height:19px;background:#efefef;border:1px solid #c0c0c0;box-sizing:border-box"></div>
<div class="t" style="left:1323px;top:512px;height:19px;line-height:19px;font-size:11px;color:#111">110896</div>
<div style="left:1321px;top:549px;width:284px;height:50px;background:#c9d7ee;border:1px solid #b0b8c4;box-sizing:border-box"></div>
<div style="left:1587px;top:550px;width:17px;height:48px;background:#f0f0f0"></div>
<svg style="position:absolute;left:1592px;top:554px;overflow:visible" width="8" height="5" viewBox="0 0 8 5"><path d="M0.5 4.5L4 1l3.5 3.5" stroke="#999" stroke-width="1.3" fill="none"/></svg>
<svg style="position:absolute;left:1592px;top:587px;overflow:visible" width="8" height="5" viewBox="0 0 8 5"><path d="M0.5 0.5L4 4l3.5-3.5" stroke="#999" stroke-width="1.3" fill="none"/></svg>
<div class="t" style="left:1323px;top:548px;height:18px;line-height:18px;font-size:11px;color:#111">Mur Rideaux au pi2</div>
<div style="left:1417px;top:551px;width:1px;height:14px;background:#111"></div>
<div style="left:1321px;top:607px;width:284px;height:150px;background:#c9d7ee;border:1px solid #b0b8c4;box-sizing:border-box"></div>
<div style="left:1587px;top:608px;width:17px;height:148px;background:#f0f0f0"></div>
<svg style="position:absolute;left:1592px;top:612px;overflow:visible" width="8" height="5" viewBox="0 0 8 5"><path d="M0.5 4.5L4 1l3.5 3.5" stroke="#999" stroke-width="1.3" fill="none"/></svg>
<svg style="position:absolute;left:1592px;top:745px;overflow:visible" width="8" height="5" viewBox="0 0 8 5"><path d="M0.5 0.5L4 4l3.5-3.5" stroke="#999" stroke-width="1.3" fill="none"/></svg>
<div style="left:1625px;top:436px;width:479px;height:60px;border:1px solid #b4b4b4;box-sizing:border-box"></div>
<div style="left:1630px;top:430px;width:48px;height:14px;background:#fff"></div>
<div class="t" style="left:1633px;top:429px;height:16px;line-height:16px;font-size:11px;color:#444">Quantité</div>
<div class="t" style="left:1636px;top:459px;height:18px;line-height:18px;font-size:11px;color:#444">Qté gestion</div>
<div style="left:1749px;top:461px;width:112px;height:19px;background:#c9d7ee;border:1px solid #b0b8c4;box-sizing:border-box"></div>
<div class="t" style="left:1818px;top:461px;width:40px;height:19px;line-height:19px;text-align:right;font-size:11px;color:#111">1</div>
<div style="left:1866px;top:461px;width:116px;height:20px;border:1px solid #a8a8a8;box-sizing:border-box;background:#fff"></div>
<svg style="position:absolute;left:1969px;top:469px;overflow:visible" width="8" height="4" viewBox="0 0 8 4"><path d="M0 0h8L4 4z" fill="#aaa"/></svg>
<div class="t" style="left:1868px;top:462px;height:19px;line-height:19px;font-size:11px;color:#111">unit</div>
<div style="left:1983px;top:461px;width:21px;height:19px;background:#efefef"></div>
<div class="t" style="left:1983px;top:460px;width:21px;height:20px;line-height:20px;text-align:center;font-size:10px;color:#555">...</div>
<div class="t" style="left:1826px;top:765px;height:18px;line-height:18px;font-size:11px;color:#444">Créer un autre item</div>
<div style="left:1927px;top:767px;width:12px;height:12px;border:1px solid #777;border-right-color:#ddd;border-bottom-color:#ddd;box-sizing:border-box;background:#fff"></div>
<div style="left:1953px;top:762px;width:75px;height:24px;background:#c6c6c6;border:1px solid #a8a8a8;box-sizing:border-box"></div>
<div class="t" style="left:1953px;top:762px;width:75px;height:24px;line-height:24px;text-align:center;font-size:11px;color:#333">Insérer</div>
<div style="left:2033px;top:762px;width:76px;height:24px;background:#efefef;border:1px solid #b4b4b4;box-sizing:border-box"></div>
<div class="t" style="left:2033px;top:762px;width:76px;height:24px;line-height:24px;text-align:center;font-size:11px;color:#333">Annuler</div>
</div></div>
<svg style="position:absolute;left:0;top:0;overflow:visible" width="2562" height="1187"><line x1="244" y1="222" x2="56" y2="77" stroke="#8a1a1a" stroke-width="2.2"/><path d="M47 70 L62 75.5 L56.5 81.5 Z" fill="#8a1a1a"/><line x1="470" y1="234" x2="824" y2="333" stroke="#8a1a1a" stroke-width="2.2"/><path d="M834 336 L818 340 L821 328 Z" fill="#8a1a1a"/></svg>
<div style="left:236.9px;top:215.3px;width:29px;height:29px;border-radius:50%;background:radial-gradient(circle at 45% 40%,#a60808 0%,#980404 60%,#7c0000 100%);box-shadow:0 0 1px rgba(0,0,0,0.4)"></div>
<div class="t" style="left:236.9px;top:215.3px;width:29px;height:29px;line-height:29px;text-align:center;font-size:17px;color:#fff">1</div>
<div style="left:444.9px;top:213.9px;width:29px;height:29px;border-radius:50%;background:radial-gradient(circle at 45% 40%,#a60808 0%,#980404 60%,#7c0000 100%);box-shadow:0 0 1px rgba(0,0,0,0.4)"></div>
<div class="t" style="left:444.9px;top:213.9px;width:29px;height:29px;line-height:29px;text-align:center;font-size:17px;color:#fff">2</div>
<div style="left:893.5px;top:523.5px;width:29px;height:29px;border-radius:50%;background:radial-gradient(circle at 45% 40%,#a60808 0%,#980404 60%,#7c0000 100%);box-shadow:0 0 1px rgba(0,0,0,0.4)"></div>
<div class="t" style="left:893.5px;top:523.5px;width:29px;height:29px;line-height:29px;text-align:center;font-size:17px;color:#fff">3</div>
<div style="left:1266.0px;top:420.9px;width:29px;height:29px;border-radius:50%;background:radial-gradient(circle at 45% 40%,#a60808 0%,#980404 60%,#7c0000 100%);box-shadow:0 0 1px rgba(0,0,0,0.4)"></div>
<div class="t" style="left:1266.0px;top:420.9px;width:29px;height:29px;line-height:29px;text-align:center;font-size:17px;color:#fff">4</div>
<div style="left:1270.7px;top:480.9px;width:29px;height:29px;border-radius:50%;background:radial-gradient(circle at 45% 40%,#a60808 0%,#980404 60%,#7c0000 100%);box-shadow:0 0 1px rgba(0,0,0,0.4)"></div>
<div class="t" style="left:1270.7px;top:480.9px;width:29px;height:29px;line-height:29px;text-align:center;font-size:17px;color:#fff">5</div>
<div style="left:1275.1px;top:544.5px;width:29px;height:29px;border-radius:50%;background:radial-gradient(circle at 45% 40%,#a60808 0%,#980404 60%,#7c0000 100%);box-shadow:0 0 1px rgba(0,0,0,0.4)"></div>
<div class="t" style="left:1275.1px;top:544.5px;width:29px;height:29px;line-height:29px;text-align:center;font-size:17px;color:#fff">6</div>
<div style="left:1954.0px;top:721.0px;width:29px;height:29px;border-radius:50%;background:radial-gradient(circle at 45% 40%,#a60808 0%,#980404 60%,#7c0000 100%);box-shadow:0 0 1px rgba(0,0,0,0.4)"></div>
<div class="t" style="left:1954.0px;top:721.0px;width:29px;height:29px;line-height:29px;text-align:center;font-size:17px;color:#fff">7</div>
</body></html>
